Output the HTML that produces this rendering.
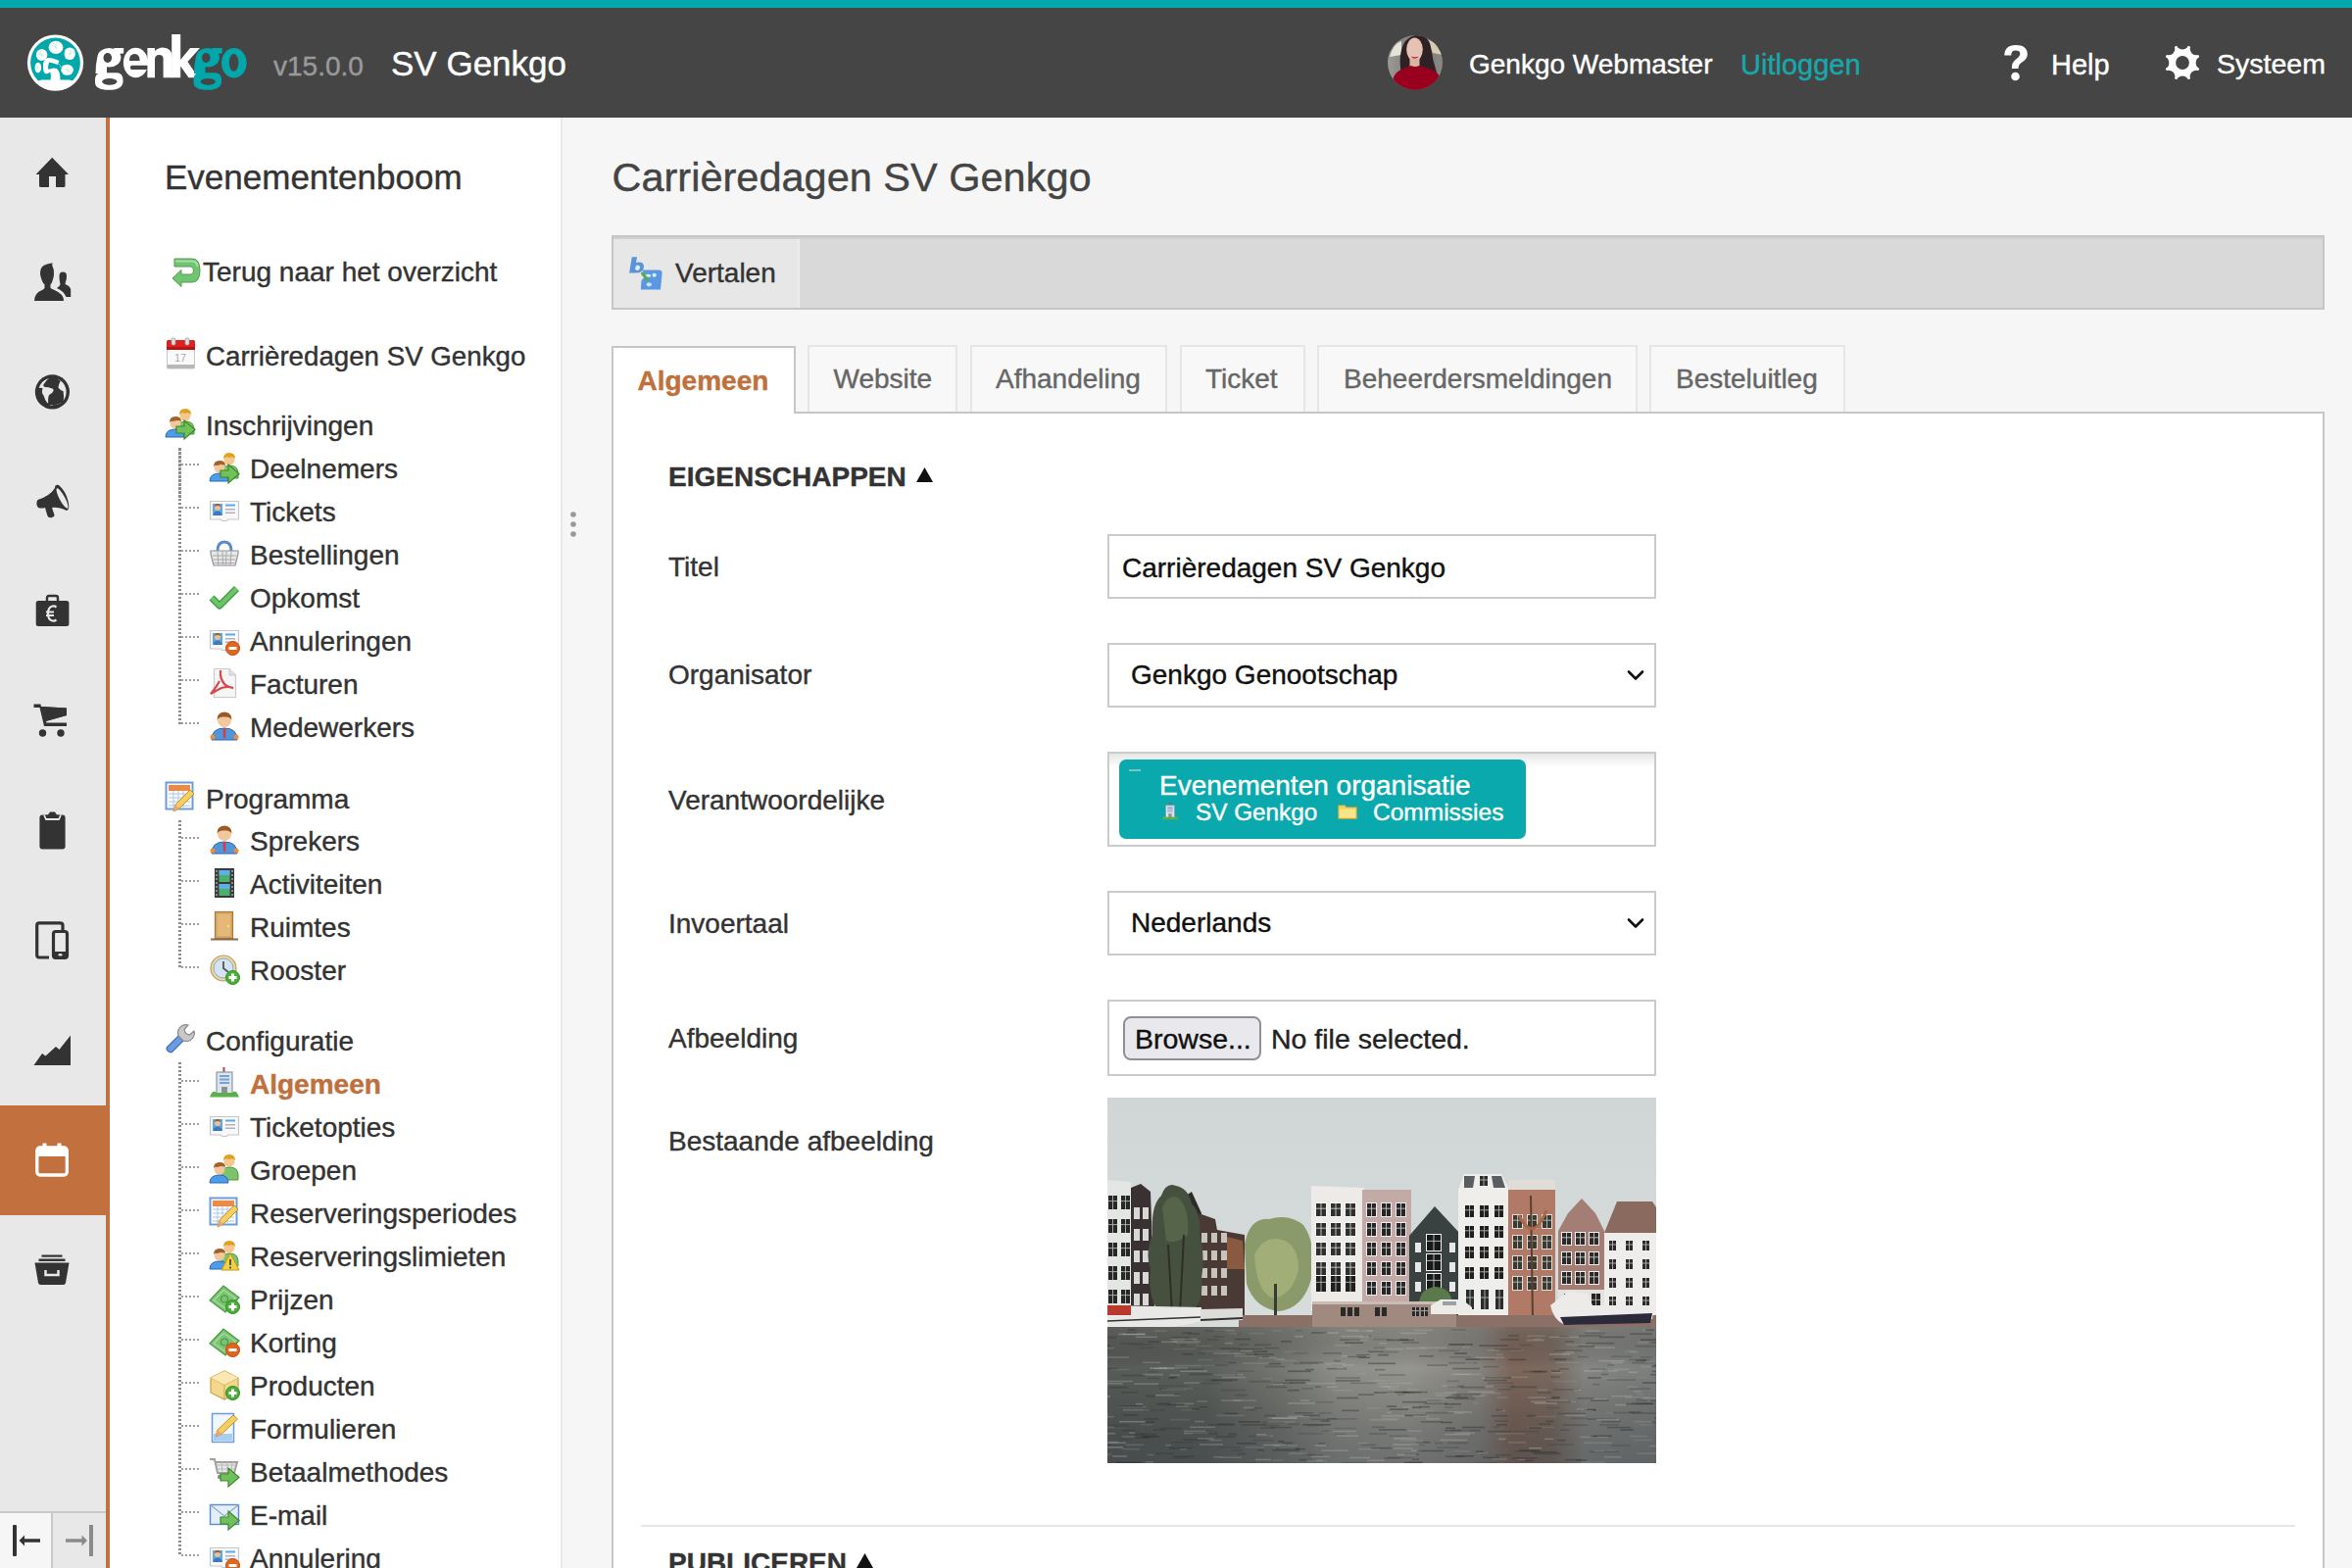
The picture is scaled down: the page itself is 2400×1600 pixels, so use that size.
<!DOCTYPE html>
<html><head><meta charset="utf-8"><title>Genkgo</title>
<style>
html,body{margin:0;padding:0;width:2400px;height:1600px;overflow:hidden;background:#f6f6f6;font-family:"Liberation Sans",sans-serif;}
.a{position:absolute;white-space:nowrap;line-height:1;margin:0;padding:0;box-sizing:border-box;-webkit-text-stroke:0.4px currentColor;}
svg.a{overflow:visible}
</style></head><body>
<div class="a" style="left:0px;top:0px;width:2400px;height:8px;background:#00a8ac"></div>
<div class="a" style="left:0px;top:8px;width:2400px;height:112px;background:#454545"></div>
<div class="a" style="left:0px;top:120px;width:108px;height:1480px;background:#e8e8e8"></div>
<div class="a" style="left:108px;top:120px;width:4px;height:1480px;background:#c2703d"></div>
<div class="a" style="left:0px;top:1128px;width:108px;height:112px;background:#c2703d"></div>
<div class="a" style="left:0px;top:1542px;width:108px;height:2px;background:#c9c9c9"></div>
<div class="a" style="left:0px;top:1544px;width:52px;height:56px;background:#f6f6f6"></div>
<div class="a" style="left:52px;top:1544px;width:2px;height:56px;background:#c9c9c9"></div>
<div class="a" style="left:112px;top:120px;width:460px;height:1480px;background:#fff"></div>
<div class="a" style="left:572px;top:120px;width:2px;height:1480px;background:#e8e8e8"></div>
<div class="a" style="left:574px;top:120px;width:1826px;height:1480px;background:#f6f6f6"></div>
<svg class="a" style="left:28px;top:35px;" width="57" height="58" viewBox="0 0 57 58">
<circle cx="28.5" cy="29" r="28.6" fill="#fff"/>
<circle cx="28.5" cy="29" r="25.4" fill="#00a8ac"/>
<path d="M32,19 L24.56,15.28 L31.22,17.26Z" fill="#fff"/><ellipse cx="29" cy="13.3" rx="7.4" ry="6.6" fill="#fff"/><path d="M30.59,14.14 L23.59,10.43 M29.86,14.76 L26.07,8.34 M28.88,14.95 L29.41,7.70 " stroke="#bfe9eb" stroke-width="0.7"/><path d="M19.5,25 L11.12,22.83 L16.34,24.66Z" fill="#fff"/><ellipse cx="14.6" cy="21" rx="5.8" ry="6.1" fill="#fff"/><path d="M16.04,21.20 L9.71,20.30 M15.72,21.96 L10.78,17.72 M15.08,22.44 L12.97,16.11 " stroke="#bfe9eb" stroke-width="0.7"/><path d="M38.5,25 L39.78,21.69 L44.91,23.58Z" fill="#fff"/><ellipse cx="43.2" cy="19.8" rx="5.7" ry="6.3" fill="#fff"/><path d="M42.94,21.35 L44.09,14.54 M42.24,20.97 L46.45,15.83 M41.83,20.24 L47.85,18.29 " stroke="#bfe9eb" stroke-width="0.7"/><path d="M13.5,34 L8.82,35.56 L11.79,37.12Z" fill="#fff"/><ellipse cx="10.8" cy="34" rx="3.3" ry="5.2" fill="#fff"/><path d="M11.50,33.32 L8.41,36.31 M11.62,34.00 L8.00,34.00 M11.50,34.68 L8.41,31.69 " stroke="#bfe9eb" stroke-width="0.7"/><path d="M35,32 L36.82,37.95 L42.49,39.60Z" fill="#fff"/><ellipse cx="40.6" cy="36.3" rx="6.3" ry="5.5" fill="#fff"/><path d="M39.03,36.16 L45.93,36.79 M39.35,35.46 L44.85,39.15 M40.04,35.02 L42.52,40.67 " stroke="#bfe9eb" stroke-width="0.7"/>
<path d="M5.9,46.5 Q10,48.5 14,46.5 L43,46.5 Q47,48.5 51.1,46.5 A28.6,28.6 0 0 1 5.9,46.5Z" fill="#fff"/>
<path d="M23.5,47 Q24.5,41 23,38.5 Q21,41 18,40 Q15.5,38 16,31 Q16.5,25.5 20.5,24 Q25,23.5 32.5,27 L31,31 Q26,29 22,28.5 Q20.5,33 21.5,36 Q26,33.5 30,35 Q33.5,38 33.5,47Z" fill="#fff"/>
<path d="M31,28.5 L34.5,34 L37,31" stroke="#5fe0e8" stroke-width="0.9" fill="none"/>
</svg>
<svg class="a" style="left:0px;top:0px;" width="400" height="120" viewBox="0 0 400 120"><ellipse cx="111.4" cy="58.7" rx="12" ry="9.8" fill="#fff"/><path d="M116,49 L126.2,49 L126.2,54.5 L119,55Z" fill="#fff"/><path d="M99.4,58 L106,62 L109,67 L109,75 L97.5,75 L98,66Z" fill="#fff"/><path d="M97,81 Q97,74.2 104,74.2 L119,74.2 Q125.6,74.2 125.6,82.5 Q125.6,91.8 111.3,91.8 Q97,91.8 97,84Z" fill="#fff"/><ellipse cx="109.8" cy="59" rx="4.3" ry="5" fill="#454545"/><ellipse cx="111.8" cy="83.3" rx="7.6" ry="3.4" fill="#454545"/><ellipse cx="138.5" cy="64" rx="12.6" ry="15.3" fill="#fff"/><path d="M132,62 Q132,55 137.3,55 Q142.6,55 142.6,62Z" fill="#454545"/><path d="M134,66.8 L152,66.8 L152,71 L134,71 Q131.8,69 134,66.8Z" fill="#454545"/><path d="M150.4,79.2 L150.4,49 L158,49 L158,52 Q161.5,48.5 166,48.5 Q175.8,48.5 175.8,59 L175.8,79.2 L166.6,79.2 L166.6,60 Q166.6,56 162.5,56 Q158,56 158,61 L158,79.2Z" fill="#fff"/><path d="M175.2,79.2 L175.2,34.9 L184.2,34.9 L184.2,61 L194,49 L204,49 L191.5,63 L202.5,79.2 L192.5,79.2 L184.2,67.5 L184.2,79.2Z" fill="#fff"/><ellipse cx="211.9" cy="58.7" rx="12" ry="9.8" fill="#00a8ac"/><path d="M216.5,49 L226.7,49 L226.7,54.5 L219.5,55Z" fill="#00a8ac"/><path d="M199.9,58 L206.5,62 L209.5,67 L209.5,75 L198.0,75 L198.5,66Z" fill="#00a8ac"/><path d="M197.5,81 Q197.5,74.2 204.5,74.2 L219.5,74.2 Q226.1,74.2 226.1,82.5 Q226.1,91.8 211.8,91.8 Q197.5,91.8 197.5,84Z" fill="#00a8ac"/><ellipse cx="210.3" cy="59" rx="4.3" ry="5" fill="#454545"/><ellipse cx="212.3" cy="83.3" rx="7.6" ry="3.4" fill="#454545"/><ellipse cx="238.8" cy="64.2" rx="12.8" ry="15.2" fill="#00a8ac"/><ellipse cx="238.6" cy="63.8" rx="4.8" ry="9" fill="#454545"/></svg>
<div class="a" style="left:279px;top:54.3px;font-size:28px;color:#9a9a9a;font-weight:400;">v15.0.0</div>
<div class="a" style="left:399px;top:47.4px;font-size:35px;color:#fff;font-weight:400;">SV Genkgo</div>
<svg class="a" style="left:1416px;top:36px;" width="56" height="56" viewBox="0 0 56 56">
<defs><clipPath id="avc"><circle cx="28" cy="28" r="28"/></clipPath>
<linearGradient id="avbg" x1="0" y1="0" x2="1" y2="0"><stop offset="0" stop-color="#9a9a96"/><stop offset=".5" stop-color="#7a7876"/><stop offset="1" stop-color="#8a8884"/></linearGradient></defs>
<g clip-path="url(#avc)">
<rect x="0" y="0" width="56" height="56" fill="url(#avbg)"/>
<path d="M2,22 Q6,8 14,6 L14,20Z" fill="#e4e4d8"/>
<path d="M40,4 Q52,8 56,20 L46,18Z" fill="#d8ccb0"/>
<path d="M14,40 Q10,18 18,6 Q24,0 30,0 Q42,0 44,12 Q46,26 50,38 Q52,44 48,46 L30,44Z" fill="#2e2224"/>
<ellipse cx="27.5" cy="14.5" rx="8.3" ry="12" fill="#e6c2b4"/>
<path d="M23.5,21.5 Q27.5,26 32,21.5 Q28,23 23.5,21.5Z" fill="#b8283a"/>
<rect x="22.5" y="24" width="10" height="8" fill="#dcb4a4"/>
<path d="M4,56 Q4,40 12,36 Q20,32 24,31 Q28,33 32,31 Q46,34 52,40 Q54,48 52,56Z" fill="#98001e"/>
</g></svg>
<div class="a" style="left:1499px;top:52.1px;font-size:28px;color:#fff;font-weight:400;">Genkgo Webmaster</div>
<div class="a" style="left:1776px;top:51.7px;font-size:29px;color:#17a8ac;font-weight:400;">Uitloggen</div>
<svg class="a" style="left:2035px;top:40px;" width="45" height="50" viewBox="0 0 45 50"><path d="M10.2,16.6 Q10.5,5.9 21.8,5.9 Q33.8,5.9 33.8,15.5 Q33.8,20.5 27.5,24 Q24.5,26 24.5,30 L17.8,30 Q17.6,24 21.5,21 Q26.3,17.5 26.3,15 Q26.3,11.6 21.8,11.6 Q17.2,11.6 17.2,16.6Z" fill="#fff"/><circle cx="21.5" cy="38" r="4.3" fill="#fff"/></svg>
<div class="a" style="left:2093px;top:51.7px;font-size:29px;color:#fff;font-weight:400;">Help</div>
<svg class="a" style="left:2200px;top:40px;" width="60" height="50" viewBox="0 0 60 50"><defs><mask id="gm"><rect width="60" height="50" fill="#000"/><circle cx="27" cy="24" r="18.2" fill="#fff"/><circle cx="47.20" cy="24.00" r="6.6" fill="#000"/><circle cx="41.28" cy="38.28" r="6.6" fill="#000"/><circle cx="27.00" cy="44.20" r="6.6" fill="#000"/><circle cx="12.72" cy="38.28" r="6.6" fill="#000"/><circle cx="6.80" cy="24.00" r="6.6" fill="#000"/><circle cx="12.72" cy="9.72" r="6.6" fill="#000"/><circle cx="27.00" cy="3.80" r="6.6" fill="#000"/><circle cx="41.28" cy="9.72" r="6.6" fill="#000"/><circle cx="27" cy="24" r="6.9" fill="#000"/></mask></defs><rect width="60" height="50" fill="#fff" mask="url(#gm)"/></svg>
<div class="a" style="left:2262px;top:50.9px;font-size:28.5px;color:#fff;font-weight:400;">Systeem</div>
<svg class="a" style="left:36px;top:160px;" width="36" height="32" viewBox="0 0 36 32"><path d="M0.6,18 L17.2,0.7 L34,18Z" fill="#333"/><path d="M4,17 L30.5,17 L30.5,29.5 Q30.5,31 29,31 L21,31 L21,20 L14,20 L14,31 L5.5,31 Q4,31 4,29.5Z" fill="#333"/></svg>
<svg class="a" style="left:35px;top:268px;" width="38" height="40" viewBox="0 0 38 40"><path d="M25.5,13.5 Q25.5,9.5 29.3,9.5 Q33,9.5 33,13.5 Q33,17 32,19.5 L31.5,22 Q36,23.5 37.2,27 L37.2,35 L32.5,35 Q30,29 23,26 Q26,24.5 26.5,22 L26,19.5 Q25.5,17 25.5,13.5Z" fill="#333"/>
<path d="M6,10.5 Q6,3 13,1.5 Q16,0.5 19,0.5 Q17.5,2 18.5,3.5 Q20,6 20,11 Q20,14 19.3,16 Q18.5,20 16.5,22.5 L16.5,26 Q18,27 21,28.3 Q30,32 30,39 L0,39 Q0,31 8,28 Q10,27 10.5,26 L10.5,22.5 Q8,20 7,16 Q6,13.5 6,10.5Z" fill="none" stroke="#e8e8e8" stroke-width="3.2"/>
<path d="M6,10.5 Q6,3 13,1.5 Q16,0.5 19,0.5 Q17.5,2 18.5,3.5 Q20,6 20,11 Q20,14 19.3,16 Q18.5,20 16.5,22.5 L16.5,26 Q18,27 21,28.3 Q30,32 30,39 L0,39 Q0,31 8,28 Q10,27 10.5,26 L10.5,22.5 Q8,20 7,16 Q6,13.5 6,10.5Z" fill="#333"/></svg>
<svg class="a" style="left:35px;top:381px;" width="37" height="38" viewBox="0 0 37 38"><circle cx="18.4" cy="18.9" r="17.6" fill="#333"/>
<circle cx="18.4" cy="18.9" r="14.2" fill="#e8e8e8"/>
<path d="M16.8,3.6 L22.8,3.6 Q23.5,6.5 26.8,7.8 Q25,10.5 24.4,14.6 Q26,17 29.6,18.3 Q30.5,24 29.6,28.8 Q26,31.5 19.5,32.3 Q14,33 13,33.6 L12,31 Q13.6,30.6 14.2,29.8 Q13.8,24 15.4,21.8 Q20,19 19.6,16.4 Q18,14.6 11.5,14 Q9,13.8 9.3,11.6 Q12,7 16.8,3.6Z" fill="#333"/>
<path d="M3.8,15 Q7.5,14.2 8.6,15.3 Q6.8,19.5 9.5,22.5 Q10.6,27 13.8,31 L12,33.5 Q5,31 3.8,22Z" fill="#333"/>
<path d="M14,34 Q20,31.5 27,31 Q25,34 18,35Z" fill="#333"/></svg>
<svg class="a" style="left:37px;top:494px;" width="34" height="37" viewBox="0 0 34 37"><path d="M1.5,16 Q-1,20 2,24 Q5,25 9,24 L11,31 Q12,35 16,34 L18,33 Q19,32 18,30 L16,24 Q22,23 31,27 Q34,26 33,20 Q31,8 23,1 Q19,0 19,4 Q14,12 1.5,16Z" fill="#333"/>
<ellipse cx="26.5" cy="14.5" rx="2.8" ry="11.5" transform="rotate(-28 26.5 14.5)" fill="#e8e8e8"/></svg>
<svg class="a" style="left:36px;top:607px;" width="36" height="34" viewBox="0 0 36 34"><path d="M12,6 L12,3 Q12,1 14,1 L21,1 Q23,1 23,3 L23,6" stroke="#333" stroke-width="2.4" fill="none"/>
<rect x="0.7" y="6" width="33.7" height="26" rx="2.5" fill="#333"/>
<path d="M21.5,12.5 Q19.5,11 17.5,11.5 Q13,12.5 13,19 Q13,25.5 17.5,26.5 Q19.5,27 21.5,25.5" stroke="#e8e8e8" stroke-width="2.2" fill="none"/>
<path d="M11,17.5 L19,17.5 M11,21 L19,21" stroke="#e8e8e8" stroke-width="1.8"/></svg>
<svg class="a" style="left:34px;top:718px;" width="36" height="36" viewBox="0 0 36 36"><path d="M0.5,0.5 L7.5,0.5 L8,3 L34,4.5 L34,12 L13,18 L13.5,19.5 L34,19.5 L34,23 L11,23 L6.5,4 L0.5,4Z" fill="#333"/>
<path d="M7.5,3 L34,4.5 L34,12 L12,18Z" fill="#333"/>
<circle cx="9.5" cy="30" r="3.7" fill="#333"/><circle cx="28" cy="30" r="3.7" fill="#333"/></svg>
<svg class="a" style="left:40px;top:828px;" width="28" height="40" viewBox="0 0 28 40"><rect x="0.4" y="3.5" width="26.2" height="35" rx="3" fill="#333"/>
<path d="M5,3.5 L7,8 L20,8 L22,3.5" stroke="#e8e8e8" stroke-width="1.8" fill="none"/>
<path d="M9,3.5 L11,0.5 L16,0.5 L18,3.5 L21,4 L19.5,6.5 L7.5,6.5 L6,4Z" fill="#333"/></svg>
<svg class="a" style="left:36px;top:940px;" width="35" height="40" viewBox="0 0 35 40"><path d="M14,37 L4,37 Q1.7,37 1.7,34.5 L1.7,4 Q1.7,1.8 4,1.8 L25.5,1.8 Q28,1.8 28,4 L28,9" stroke="#333" stroke-width="3.2" fill="none"/>
<rect x="18.5" y="10.5" width="14" height="27" rx="2.5" stroke="#333" stroke-width="3.2" fill="none"/>
<rect x="18.5" y="31" width="14" height="6.5" fill="#333"/>
<ellipse cx="25.5" cy="34.3" rx="2" ry="1.3" fill="#e8e8e8"/></svg>
<svg class="a" style="left:34px;top:1056px;" width="39" height="32" viewBox="0 0 39 32"><path d="M0.5,31 L9,19 L12.5,21.5 L23,12 L26.5,15 L38,0.5 L38,31Z" fill="#333"/></svg>
<svg class="a" style="left:36px;top:1166px;" width="35" height="36" viewBox="0 0 35 36"><rect x="1.8" y="5" width="30.5" height="28" rx="3" stroke="#fff" stroke-width="3.3" fill="none"/>
<rect x="1.8" y="5" width="30.5" height="9" fill="#fff"/>
<rect x="7.5" y="0.5" width="4" height="8" fill="#fff"/><rect x="22.5" y="0.5" width="4" height="8" fill="#fff"/>
<rect x="6.5" y="7.5" width="6" height="3" fill="#fff"/></svg>
<svg class="a" style="left:35px;top:1280px;" width="37" height="32" viewBox="0 0 37 32"><rect x="7.5" y="0.5" width="21" height="2.2" fill="#333"/>
<rect x="4.5" y="4.5" width="27" height="2.5" fill="#333"/>
<path d="M0.5,8.5 L35.5,8.5 L32,29 Q31.5,31 29.5,31 L6.5,31 Q4.5,31 4,29Z" fill="#333"/>
<path d="M11.5,16 L11.5,21 L24.5,21 L24.5,16" stroke="#e8e8e8" stroke-width="2.5" fill="none"/></svg>
<svg class="a" style="left:0px;top:1550px;" width="108" height="50" viewBox="0 0 108 50"><rect x="13" y="6" width="4" height="32" rx="1" fill="#333"/>
<path d="M19.5,22 L25,16.5 L25,20.3 L41,20.3 L41,23.7 L25,23.7 L25,27.5Z" fill="#333"/>
<rect x="91" y="6" width="4" height="32" fill="#8a8a8a"/>
<path d="M89,22 L83.5,16.5 L83.5,20.3 L67,20.3 L67,23.7 L83.5,23.7 L83.5,27.5Z" fill="#8a8a8a"/></svg>
<div class="a" style="left:168px;top:162.8px;font-size:35px;color:#333;font-weight:400;">Evenementenboom</div>
<div class="a" style="left:207px;top:263.6px;font-size:28px;color:#333;font-weight:400;">Terug naar het overzicht</div>
<div class="a" style="left:210px;top:349.5px;font-size:27.7px;color:#333;font-weight:400;">Carrièredagen SV Genkgo</div>
<div class="a" style="left:210px;top:421.1px;font-size:28px;color:#333;font-weight:400;">Inschrijvingen</div>
<div class="a" style="left:255px;top:464.7px;font-size:28px;color:#333;font-weight:400;">Deelnemers</div>
<div class="a" style="left:255px;top:508.6px;font-size:28px;color:#333;font-weight:400;">Tickets</div>
<div class="a" style="left:255px;top:552.6px;font-size:28px;color:#333;font-weight:400;">Bestellingen</div>
<div class="a" style="left:255px;top:596.6px;font-size:28px;color:#333;font-weight:400;">Opkomst</div>
<div class="a" style="left:255px;top:640.6px;font-size:28px;color:#333;font-weight:400;">Annuleringen</div>
<div class="a" style="left:255px;top:684.6px;font-size:28px;color:#333;font-weight:400;">Facturen</div>
<div class="a" style="left:255px;top:728.6px;font-size:28px;color:#333;font-weight:400;">Medewerkers</div>
<div class="a" style="left:210px;top:801.5px;font-size:28px;color:#333;font-weight:400;">Programma</div>
<div class="a" style="left:255px;top:845.3px;font-size:28px;color:#333;font-weight:400;">Sprekers</div>
<div class="a" style="left:255px;top:889.3px;font-size:28px;color:#333;font-weight:400;">Activiteiten</div>
<div class="a" style="left:255px;top:933.3px;font-size:28px;color:#333;font-weight:400;">Ruimtes</div>
<div class="a" style="left:255px;top:977.3px;font-size:28px;color:#333;font-weight:400;">Rooster</div>
<div class="a" style="left:210px;top:1048.7px;font-size:28px;color:#333;font-weight:400;">Configuratie</div>
<div class="a" style="left:255px;top:1093.3px;font-size:28px;color:#c0703d;font-weight:700;">Algemeen</div>
<div class="a" style="left:255px;top:1137.3px;font-size:28px;color:#333;font-weight:400;">Ticketopties</div>
<div class="a" style="left:255px;top:1181.3px;font-size:28px;color:#333;font-weight:400;">Groepen</div>
<div class="a" style="left:255px;top:1225.3px;font-size:28px;color:#333;font-weight:400;">Reserveringsperiodes</div>
<div class="a" style="left:255px;top:1269.3px;font-size:28px;color:#333;font-weight:400;">Reserveringslimieten</div>
<div class="a" style="left:255px;top:1313.3px;font-size:28px;color:#333;font-weight:400;">Prijzen</div>
<div class="a" style="left:255px;top:1357.3px;font-size:28px;color:#333;font-weight:400;">Korting</div>
<div class="a" style="left:255px;top:1401.3px;font-size:28px;color:#333;font-weight:400;">Producten</div>
<div class="a" style="left:255px;top:1445.3px;font-size:28px;color:#333;font-weight:400;">Formulieren</div>
<div class="a" style="left:255px;top:1489.3px;font-size:28px;color:#333;font-weight:400;">Betaalmethodes</div>
<div class="a" style="left:255px;top:1533.3px;font-size:28px;color:#333;font-weight:400;">E-mail</div>
<div class="a" style="left:255px;top:1577.3px;font-size:28px;color:#333;font-weight:400;">Annulering</div>
<div class="a" style="left:182px;top:457px;width:2.5px;height:282px;background:repeating-linear-gradient(to bottom,#8c8c8c 0,#8c8c8c 2.5px,transparent 2.5px,transparent 4px)"></div>
<div class="a" style="left:185px;top:473px;width:20px;height:2px;background:repeating-linear-gradient(to right,#a0a0a0 0,#a0a0a0 2px,transparent 2px,transparent 4px)"></div>
<div class="a" style="left:185px;top:517px;width:20px;height:2px;background:repeating-linear-gradient(to right,#a0a0a0 0,#a0a0a0 2px,transparent 2px,transparent 4px)"></div>
<div class="a" style="left:185px;top:561px;width:20px;height:2px;background:repeating-linear-gradient(to right,#a0a0a0 0,#a0a0a0 2px,transparent 2px,transparent 4px)"></div>
<div class="a" style="left:185px;top:605px;width:20px;height:2px;background:repeating-linear-gradient(to right,#a0a0a0 0,#a0a0a0 2px,transparent 2px,transparent 4px)"></div>
<div class="a" style="left:185px;top:649px;width:20px;height:2px;background:repeating-linear-gradient(to right,#a0a0a0 0,#a0a0a0 2px,transparent 2px,transparent 4px)"></div>
<div class="a" style="left:185px;top:693px;width:20px;height:2px;background:repeating-linear-gradient(to right,#a0a0a0 0,#a0a0a0 2px,transparent 2px,transparent 4px)"></div>
<div class="a" style="left:185px;top:737px;width:20px;height:2px;background:repeating-linear-gradient(to right,#a0a0a0 0,#a0a0a0 2px,transparent 2px,transparent 4px)"></div>
<div class="a" style="left:182px;top:837px;width:2.5px;height:151px;background:repeating-linear-gradient(to bottom,#8c8c8c 0,#8c8c8c 2.5px,transparent 2.5px,transparent 4px)"></div>
<div class="a" style="left:185px;top:854px;width:20px;height:2px;background:repeating-linear-gradient(to right,#a0a0a0 0,#a0a0a0 2px,transparent 2px,transparent 4px)"></div>
<div class="a" style="left:185px;top:898px;width:20px;height:2px;background:repeating-linear-gradient(to right,#a0a0a0 0,#a0a0a0 2px,transparent 2px,transparent 4px)"></div>
<div class="a" style="left:185px;top:942px;width:20px;height:2px;background:repeating-linear-gradient(to right,#a0a0a0 0,#a0a0a0 2px,transparent 2px,transparent 4px)"></div>
<div class="a" style="left:185px;top:986px;width:20px;height:2px;background:repeating-linear-gradient(to right,#a0a0a0 0,#a0a0a0 2px,transparent 2px,transparent 4px)"></div>
<div class="a" style="left:182px;top:1084px;width:2.5px;height:504px;background:repeating-linear-gradient(to bottom,#8c8c8c 0,#8c8c8c 2.5px,transparent 2.5px,transparent 4px)"></div>
<div class="a" style="left:185px;top:1102px;width:20px;height:2px;background:repeating-linear-gradient(to right,#a0a0a0 0,#a0a0a0 2px,transparent 2px,transparent 4px)"></div>
<div class="a" style="left:185px;top:1146px;width:20px;height:2px;background:repeating-linear-gradient(to right,#a0a0a0 0,#a0a0a0 2px,transparent 2px,transparent 4px)"></div>
<div class="a" style="left:185px;top:1190px;width:20px;height:2px;background:repeating-linear-gradient(to right,#a0a0a0 0,#a0a0a0 2px,transparent 2px,transparent 4px)"></div>
<div class="a" style="left:185px;top:1234px;width:20px;height:2px;background:repeating-linear-gradient(to right,#a0a0a0 0,#a0a0a0 2px,transparent 2px,transparent 4px)"></div>
<div class="a" style="left:185px;top:1278px;width:20px;height:2px;background:repeating-linear-gradient(to right,#a0a0a0 0,#a0a0a0 2px,transparent 2px,transparent 4px)"></div>
<div class="a" style="left:185px;top:1322px;width:20px;height:2px;background:repeating-linear-gradient(to right,#a0a0a0 0,#a0a0a0 2px,transparent 2px,transparent 4px)"></div>
<div class="a" style="left:185px;top:1366px;width:20px;height:2px;background:repeating-linear-gradient(to right,#a0a0a0 0,#a0a0a0 2px,transparent 2px,transparent 4px)"></div>
<div class="a" style="left:185px;top:1410px;width:20px;height:2px;background:repeating-linear-gradient(to right,#a0a0a0 0,#a0a0a0 2px,transparent 2px,transparent 4px)"></div>
<div class="a" style="left:185px;top:1454px;width:20px;height:2px;background:repeating-linear-gradient(to right,#a0a0a0 0,#a0a0a0 2px,transparent 2px,transparent 4px)"></div>
<div class="a" style="left:185px;top:1498px;width:20px;height:2px;background:repeating-linear-gradient(to right,#a0a0a0 0,#a0a0a0 2px,transparent 2px,transparent 4px)"></div>
<div class="a" style="left:185px;top:1542px;width:20px;height:2px;background:repeating-linear-gradient(to right,#a0a0a0 0,#a0a0a0 2px,transparent 2px,transparent 4px)"></div>
<div class="a" style="left:185px;top:1586px;width:20px;height:2px;background:repeating-linear-gradient(to right,#a0a0a0 0,#a0a0a0 2px,transparent 2px,transparent 4px)"></div>
<svg class="a" style="left:0;top:0" width="574" height="1600"><defs><symbol id="i-back" viewBox="0 0 32 32" overflow="visible"><path d="M4,2 L22,2 Q30,2 30,14 Q30,26 22,26 L11,26 L11,30.5 L2,22 L11,13.5 L11,18 L21,18 Q23.5,18 23.5,14 Q23.5,10 21,10 L4,10Z" fill="#72c472" stroke="#48a048" stroke-width="1"/>
<path d="M5,4.5 L22,4.5 Q27,4.5 27.5,10" stroke="#a8dca8" stroke-width="2" fill="none"/></symbol><symbol id="i-cal" viewBox="0 0 32 32" overflow="visible"><rect x="1.5" y="3" width="28" height="28" rx="1.5" fill="#fafafa" stroke="#c8c8c8" stroke-width="1"/>
<rect x="1" y="2" width="29" height="10" rx="1.5" fill="#dd2020"/>
<rect x="1" y="9" width="29" height="3" fill="#b81414"/>
<rect x="6" y="0" width="4" height="7" rx="1.5" fill="#ddd" stroke="#999" stroke-width=".8"/>
<rect x="20" y="0" width="4" height="7" rx="1.5" fill="#ddd" stroke="#999" stroke-width=".8"/>
<text x="9" y="24" font-family="Liberation Sans" font-size="11" fill="#aaa">17</text>
<rect x="1.5" y="27" width="28" height="4" fill="#b8b8b8"/></symbol><symbol id="i-users" viewBox="0 0 32 32" overflow="visible"><circle cx="21" cy="8" r="5.5" fill="#f5c890"/>
<path d="M15,7 Q15,1 21,1 Q27,1 27,7 Q24,4 21,6 Q18,4 15,7Z" fill="#e0a020"/>
<path d="M13,22 Q13,14 21,14 Q30,14 30,22 L30,27 L13,27Z" fill="#7cc36a" stroke="#4a9a3a" stroke-width="1"/>
<circle cx="11" cy="16" r="5.5" fill="#f3c79d"/>
<path d="M5,15 Q5,9 11,9 Q17,9 17,14 Q13,12 9,14 Q7,13 5,15Z" fill="#a0622c"/>
<path d="M1,30 Q1,22 11,22 Q20,22 20,30Z" fill="#4c9ce8" stroke="#2a6cb8" stroke-width="1"/></symbol><symbol id="i-arrow" viewBox="0 0 32 32" overflow="visible"><path d="M12,19 L20,19 L20,13 L31,22.5 L20,32 L20,26 L12,26Z" fill="#72c05c" stroke="#3a8a2a" stroke-width="1.2"/></symbol><symbol id="i-card" viewBox="0 0 32 32" overflow="visible"><path d="M1.5,6.5 L30.5,6.5 L30.5,25 L20,25 L18,26.5 L14,26.5 L12,25 L1.5,25Z" fill="#f8f8fa" stroke="#c4c8cc" stroke-width="1.2"/>
<rect x="4" y="9" width="10" height="12" fill="#5ea8e8"/>
<circle cx="9" cy="13" r="3" fill="#f0c090"/><path d="M6,12 Q6,9 9,9 Q12,9 12,12 Q9,10 6,12Z" fill="#a05a28"/>
<path d="M4.5,21 Q5,16.5 9,16.5 Q13,16.5 13.5,21Z" fill="#3a78c0"/>
<rect x="17" y="9.5" width="10" height="2" fill="#5ea8e8"/>
<rect x="17" y="14" width="10" height="1.5" fill="#b0b4b8"/><rect x="17" y="17.5" width="10" height="1.5" fill="#b0b4b8"/></symbol><symbol id="i-basket" viewBox="0 0 32 32" overflow="visible"><path d="M9,13 Q9,4 16,4 Q23,4 23,13" stroke="#5a8ac8" stroke-width="3" fill="none"/>
<path d="M2,13 L30,13 L30,16 L27,28 L5,28 L2,16Z" fill="#e8e8e8" stroke="#909090" stroke-width="1.2"/>
<path d="M4,18 L28,18 M4.8,22 L27.2,22 M5.5,25.5 L26.5,25.5 M9,14 L10,28 M14,14 L14.5,28 M18,14 L17.5,28 M23,14 L22,28" stroke="#a8a8a8" stroke-width="1"/></symbol><symbol id="i-check" viewBox="0 0 32 32" overflow="visible"><path d="M3,17 L11,25 L28.5,7.5" stroke="#3d9a3d" stroke-width="7" fill="none" stroke-linejoin="round"/>
<path d="M3,17 L11,25 L28.5,7.5" stroke="#6cc46c" stroke-width="4.5" fill="none" stroke-linejoin="round"/></symbol><symbol id="i-minus" viewBox="0 0 32 32" overflow="visible"><circle cx="24.5" cy="24.5" r="7" fill="#e2661e" stroke="#c04a10" stroke-width="1"/><rect x="20.5" y="23" width="8" height="3" fill="#fff"/></symbol><symbol id="i-plus" viewBox="0 0 32 32" overflow="visible"><circle cx="24.5" cy="24.5" r="7" fill="#4caf3a" stroke="#2e8a22" stroke-width="1"/><path d="M20.5,24.5 L28.5,24.5 M24.5,20.5 L24.5,28.5" stroke="#fff" stroke-width="3"/></symbol><symbol id="i-pdf" viewBox="0 0 32 32" overflow="visible"><path d="M5.5,1.5 L21,1.5 L27.5,8 L27.5,30.5 L5.5,30.5Z" fill="#f6f6f6" stroke="#cacaca" stroke-width="1.2"/>
<path d="M21,1.5 L21,8 L27.5,8" fill="#e0e0e0" stroke="#cacaca" stroke-width="1"/>
<path d="M12,3 Q11,12 17,18 Q21,21 25,21 Q20,19 13,21 Q7,24 2,27 Q8,20 11,14" stroke="#d84848" stroke-width="2.2" fill="none"/></symbol><symbol id="i-user" viewBox="0 0 32 32" overflow="visible"><circle cx="16" cy="10" r="7" fill="#f3c79d"/>
<path d="M8.5,10 Q8,2 16,1.5 Q24,2 23.5,10 Q22,6 16,6.5 Q10,6 8.5,10Z" fill="#9a5a26"/>
<path d="M3,30 Q3,18 16,18 Q29,18 29,30Z" fill="#5494d8" stroke="#2e64a8" stroke-width="1"/>
<path d="M14.5,18.5 L17.5,18.5 L17,28 L15,28Z" fill="#d04040"/>
<circle cx="4" cy="27" r="2.5" fill="#e89040"/><circle cx="28" cy="27" r="2.5" fill="#e89040"/></symbol><symbol id="i-calpen" viewBox="0 0 32 32" overflow="visible"><rect x="1.5" y="1.5" width="27" height="27" fill="#fff" stroke="#6c9ce0" stroke-width="2"/>
<rect x="4" y="4" width="22" height="6" fill="#f08a40"/>
<path d="M4,13 L26,13 M4,17 L26,17 M4,21 L26,21 M4,25 L26,25 M9,10 L9,27 M14,10 L14,27 M19,10 L19,27" stroke="#a8c4e8" stroke-width="1"/>
<path d="M9,31 L11,24 L26,9 L30,13 L15,28Z" fill="#f4d060" stroke="#c89020" stroke-width="1"/>
<path d="M9,31 L11,24 L15,28Z" fill="#e8a878"/></symbol><symbol id="i-film" viewBox="0 0 32 32" overflow="visible"><rect x="6" y="1" width="20" height="30" fill="#3a3a3a"/>
<rect x="10.5" y="3" width="11" height="12" fill="#4caf6a"/><rect x="10.5" y="3" width="11" height="5" fill="#5ab0e8"/>
<rect x="10.5" y="17" width="11" height="12" fill="#4caf6a"/><rect x="10.5" y="17" width="11" height="5" fill="#5ab0e8"/>
<path d="M8,3 L8,30 M24,3 L24,30" stroke="#8a8a8a" stroke-width="2" stroke-dasharray="2 2"/></symbol><symbol id="i-door" viewBox="0 0 32 32" overflow="visible"><rect x="6.5" y="1.5" width="18" height="27" fill="#d8a868" stroke="#a87838" stroke-width="1.2"/>
<rect x="9" y="4" width="13" height="22" fill="#e4b878"/>
<circle cx="20" cy="16" r="1.2" fill="#f8e080"/>
<rect x="2" y="28.5" width="28" height="2" fill="#8a6a4a"/></symbol><symbol id="i-clock" viewBox="0 0 32 32" overflow="visible"><circle cx="15" cy="15" r="13" fill="#e8d8a8" stroke="#b8a068" stroke-width="1.2"/>
<circle cx="15" cy="15" r="10" fill="#d4e4f4" stroke="#98a8b8" stroke-width="1"/>
<path d="M15,8 L15,15 L20,19" stroke="#555" stroke-width="1.8" fill="none"/></symbol><symbol id="i-wrench" viewBox="0 0 32 32" overflow="visible"><path d="M3,28 Q1,26 3,24 L15,12 L20,17 L8,29 Q6,31 3,28Z" fill="#6c9ce0" stroke="#4070b8" stroke-width="1.2"/>
<path d="M14,13 Q12,6 18,2.5 Q21,1 24,2 L20,6.5 L21.5,10.5 L25.5,12 L30,8 Q31,11 29.5,14 Q26,20 19,18Z" fill="#c8c8c8" stroke="#8a8a8a" stroke-width="1.2"/></symbol><symbol id="i-building" viewBox="0 0 32 32" overflow="visible"><rect x="14.5" y="0" width="2" height="5" fill="#c04040"/>
<rect x="8" y="5" width="16" height="22" fill="#dce4ec" stroke="#8a98a8" stroke-width="1.2"/>
<path d="M11,9 L21,9 M11,12.5 L21,12.5 M11,16 L21,16" stroke="#7aa0d8" stroke-width="2"/>
<rect x="13" y="20" width="6" height="7" fill="#909090"/>
<path d="M1,30.5 Q4,22 8,26 L24,26 Q28,22 31,30.5Z" fill="#5cb04c"/></symbol><symbol id="i-money" viewBox="0 0 32 32" overflow="visible"><path d="M1,18 L15,3 L31,15 L17,30Z" fill="#7cc474" stroke="#4a9a42" stroke-width="1.2"/>
<path d="M5,18 L15,7.5 L27,15.5 L17,26Z" fill="none" stroke="#a8dca0" stroke-width="1.2"/>
<circle cx="16" cy="16.5" r="3.5" fill="none" stroke="#4a9a42" stroke-width="1.2"/></symbol><symbol id="i-box" viewBox="0 0 32 32" overflow="visible"><path d="M2,9 L16,2 L30,9 L30,24 L16,31 L2,24Z" fill="#f4d88a" stroke="#c8a050" stroke-width="1.2"/>
<path d="M2,9 L16,16 L30,9 M16,16 L16,31" stroke="#c8a050" stroke-width="1" fill="none"/>
<path d="M2,9 L16,2 L30,9 L16,16Z" fill="#fbe8b0"/></symbol><symbol id="i-pagepen" viewBox="0 0 32 32" overflow="visible"><rect x="3.5" y="1.5" width="22" height="29" fill="#f0f6fc" stroke="#6c9ce0" stroke-width="1.5"/>
<rect x="5" y="22" width="19" height="7" fill="#a8cdf0"/>
<path d="M7,25 L9,18 L25,3 L29.5,7 L13.5,22Z" fill="#f4d060" stroke="#c89020" stroke-width="1"/>
<path d="M7,25 L9,18 L13.5,22Z" fill="#e8a878"/></symbol><symbol id="i-cart" viewBox="0 0 32 32" overflow="visible"><path d="M1,4 L6,4 L9,18 L26,18 L29,7 L7,7" stroke="#a0a0a0" stroke-width="2" fill="#e8e8e8"/>
<path d="M8,10 L28,10 M8.5,14 L27,14 M13,7 L14,18 M19,7 L19,18 M24,7 L23,18" stroke="#b8b8b8" stroke-width="1"/>
<circle cx="11" cy="22" r="2.2" fill="#909090"/></symbol><symbol id="i-mail" viewBox="0 0 32 32" overflow="visible"><rect x="1.5" y="6.5" width="29" height="20" fill="#e4eefa" stroke="#5a8cd0" stroke-width="1.4"/>
<path d="M1.5,6.5 L16,18 L30.5,6.5" stroke="#8aaad8" stroke-width="1.2" fill="none"/></symbol><symbol id="i-warn" viewBox="0 0 32 32" overflow="visible"><path d="M22,14 L31,31 L13,31Z" fill="#f4d040" stroke="#c89818" stroke-width="1"/><rect x="21" y="20" width="2" height="6" fill="#555"/><rect x="21" y="27.5" width="2" height="2" fill="#555"/></symbol><symbol id="i-translate" viewBox="0 0 32 32" overflow="visible"><path d="M4.5,2 L9.5,2 L8.5,7.5 Q15.5,6 16,11 Q16,17.5 8,17.5 L2,17.5Z" fill="#5a94d8"/>
<ellipse cx="10" cy="12.5" rx="2.2" ry="2.6" fill="#d8ecfa" transform="rotate(20 10 12.5)"/>
<path d="M15,14.5 L31,14.5 Q34,15 33.5,18 L32,33.5 L13,33.5 L13.5,26 Q14,22 19,21.5 L22,21.5 Q25,17.5 16,19Z" fill="#5a98e4"/>
<ellipse cx="26" cy="19.5" rx="2" ry="1.8" fill="#d8ecfa"/><ellipse cx="21" cy="28.5" rx="2.5" ry="2" fill="#c8e4fa"/>
<path d="M14,17 L20,25" stroke="#58a858" stroke-width="3"/></symbol><symbol id="i-folder" viewBox="0 0 32 32" overflow="visible"><path d="M1,6 L12,6 L14,9 L31,9 L31,28 L1,28Z" fill="#f0d060" stroke="#c8a030" stroke-width="1.2"/><rect x="3" y="12" width="26" height="14" fill="#f8e48a"/></symbol></defs><use href="#i-back" x="174" y="262" width="32" height="32"/><use href="#i-cal" x="169" y="345" width="32" height="32"/><use href="#i-users" x="168" y="416" width="32" height="32"/><use href="#i-arrow" x="168" y="416" width="32" height="32"/><use href="#i-users" x="213" y="461" width="32" height="32"/><use href="#i-arrow" x="213" y="461" width="32" height="32"/><use href="#i-card" x="213" y="505" width="32" height="32"/><use href="#i-basket" x="213" y="549" width="32" height="32"/><use href="#i-check" x="213" y="593" width="32" height="32"/><use href="#i-card" x="213" y="637" width="32" height="32"/><use href="#i-minus" x="213" y="637" width="32" height="32"/><use href="#i-pdf" x="213" y="681" width="32" height="32"/><use href="#i-user" x="213" y="725" width="32" height="32"/><use href="#i-calpen" x="168" y="797" width="32" height="32"/><use href="#i-user" x="213" y="841" width="32" height="32"/><use href="#i-film" x="213" y="885" width="32" height="32"/><use href="#i-door" x="213" y="929" width="32" height="32"/><use href="#i-clock" x="213" y="973" width="32" height="32"/><use href="#i-plus" x="213" y="973" width="32" height="32"/><use href="#i-wrench" x="168" y="1044" width="32" height="32"/><use href="#i-building" x="213" y="1089" width="32" height="32"/><use href="#i-card" x="213" y="1133" width="32" height="32"/><use href="#i-users" x="213" y="1177" width="32" height="32"/><use href="#i-calpen" x="213" y="1221" width="32" height="32"/><use href="#i-users" x="213" y="1265" width="32" height="32"/><use href="#i-warn" x="213" y="1265" width="32" height="32"/><use href="#i-money" x="213" y="1309" width="32" height="32"/><use href="#i-plus" x="213" y="1309" width="32" height="32"/><use href="#i-money" x="213" y="1353" width="32" height="32"/><use href="#i-minus" x="213" y="1353" width="32" height="32"/><use href="#i-box" x="213" y="1397" width="32" height="32"/><use href="#i-plus" x="213" y="1397" width="32" height="32"/><use href="#i-pagepen" x="213" y="1441" width="32" height="32"/><use href="#i-cart" x="213" y="1485" width="32" height="32"/><use href="#i-arrow" x="213" y="1485" width="32" height="32"/><use href="#i-mail" x="213" y="1529" width="32" height="32"/><use href="#i-arrow" x="213" y="1529" width="32" height="32"/><use href="#i-card" x="213" y="1573" width="32" height="32"/><use href="#i-minus" x="213" y="1573" width="32" height="32"/></svg>
<svg class="a" style="left:580px;top:518px;" width="10" height="34" viewBox="0 0 10 34"><circle cx="5" cy="7" r="2.8" fill="#999"/><circle cx="5" cy="17" r="2.8" fill="#999"/><circle cx="5" cy="27" r="2.8" fill="#999"/></svg>
<div class="a" style="left:624.5px;top:160.4px;font-size:41.5px;color:#444;font-weight:400;">Carrièredagen SV Genkgo</div>
<div class="a" style="left:624px;top:240px;width:1748px;height:76px;border:2px solid #c6c6c6;background:#d9d9d9;"></div>
<div class="a" style="left:626px;top:242px;width:189px;height:72px;background:#e7e7e7"></div>
<div class="a" style="left:814px;top:244px;width:2px;height:70px;background:#ededed"></div>
<div class="a" style="left:626px;top:242px;width:1744px;height:2px;background:#d0d0d0"></div>
<svg class="a" style="left:640px;top:260px;" width="34" height="34" viewBox="0 0 32 32"><path d="M4.5,2 L9.5,2 L8.5,7.5 Q15.5,6 16,11 Q16,17.5 8,17.5 L2,17.5Z" fill="#5a94d8"/>
<ellipse cx="10" cy="12.5" rx="2.2" ry="2.6" fill="#d8ecfa" transform="rotate(20 10 12.5)"/>
<path d="M15,14.5 L31,14.5 Q34,15 33.5,18 L32,33.5 L13,33.5 L13.5,26 Q14,22 19,21.5 L22,21.5 Q25,17.5 16,19Z" fill="#5a98e4"/>
<ellipse cx="26" cy="19.5" rx="2" ry="1.8" fill="#d8ecfa"/><ellipse cx="21" cy="28.5" rx="2.5" ry="2" fill="#c8e4fa"/>
<path d="M14,17 L20,25" stroke="#58a858" stroke-width="3"/></svg>
<div class="a" style="left:689px;top:265.3px;font-size:28px;color:#333;font-weight:400;">Vertalen</div>
<div class="a" style="left:624px;top:420px;width:1748px;height:1220px;border:2px solid #c6c6c6;background:#fff;"></div>
<div class="a" style="left:824px;top:351.5px;width:153px;height:68.5px;border:2px solid #e6e6e6;background:#f8f8f8;border-bottom:none"></div>
<div class="a" style="left:850.5px;top:373.3px;font-size:28px;color:#666;font-weight:400;">Website</div>
<div class="a" style="left:990px;top:351.5px;width:201px;height:68.5px;border:2px solid #e6e6e6;background:#f8f8f8;border-bottom:none"></div>
<div class="a" style="left:1016px;top:373.3px;font-size:28px;color:#666;font-weight:400;">Afhandeling</div>
<div class="a" style="left:1204px;top:351.5px;width:128px;height:68.5px;border:2px solid #e6e6e6;background:#f8f8f8;border-bottom:none"></div>
<div class="a" style="left:1230px;top:373.3px;font-size:28px;color:#666;font-weight:400;">Ticket</div>
<div class="a" style="left:1344px;top:351.5px;width:327px;height:68.5px;border:2px solid #e6e6e6;background:#f8f8f8;border-bottom:none"></div>
<div class="a" style="left:1371px;top:373.3px;font-size:28px;color:#666;font-weight:400;">Beheerdersmeldingen</div>
<div class="a" style="left:1683px;top:351.5px;width:200px;height:68.5px;border:2px solid #e6e6e6;background:#f8f8f8;border-bottom:none"></div>
<div class="a" style="left:1710px;top:373.3px;font-size:28px;color:#666;font-weight:400;">Besteluitleg</div>
<div class="a" style="left:624px;top:353px;width:188px;height:69px;border:2px solid #c6c6c6;background:#fff;border-bottom:none"></div>
<div class="a" style="left:650.5px;top:375.1px;font-size:28px;color:#c0703d;font-weight:700;">Algemeen</div>
<div class="a" style="left:682px;top:473.3px;font-size:28px;color:#333;font-weight:700;">EIGENSCHAPPEN</div>
<svg class="a" style="left:934px;top:476px;" width="20" height="17" viewBox="0 0 20 17"><path d="M1,16 L9.5,1 L18,16Z" fill="#111"/></svg>
<div class="a" style="left:682px;top:565.3px;font-size:28px;color:#333;font-weight:400;">Titel</div>
<div class="a" style="left:682px;top:674.9px;font-size:28px;color:#333;font-weight:400;">Organisator</div>
<div class="a" style="left:682px;top:802.6px;font-size:28px;color:#333;font-weight:400;">Verantwoordelijke</div>
<div class="a" style="left:682px;top:928.5px;font-size:28px;color:#333;font-weight:400;">Invoertaal</div>
<div class="a" style="left:682px;top:1045.6px;font-size:28px;color:#333;font-weight:400;">Afbeelding</div>
<div class="a" style="left:682px;top:1151.3px;font-size:28px;color:#333;font-weight:400;">Bestaande afbeelding</div>
<div class="a" style="left:1130px;top:545px;width:560px;height:66px;border:2px solid #cbcbcb;background:#fff;"></div>
<div class="a" style="left:1145px;top:566.3px;font-size:28px;color:#111;font-weight:400;">Carrièredagen SV Genkgo</div>
<div class="a" style="left:1130px;top:656px;width:560px;height:66px;border:2px solid #cbcbcb;background:#fff;"></div>
<div class="a" style="left:1154px;top:675.3px;font-size:28px;color:#111;font-weight:400;">Genkgo Genootschap</div>
<svg class="a" style="left:1660px;top:683px;" width="20" height="14" viewBox="0 0 20 14"><path d="M2,2.5 L9,9.5 L16,2.5" stroke="#111" stroke-width="2.6" fill="none" stroke-linecap="round" stroke-linejoin="round"/></svg>
<div class="a" style="left:1130px;top:767px;width:560px;height:97px;border:2px solid #cbcbcb;background:#fff;background:linear-gradient(to bottom,#e6e6e6 0,#fff 14px)"></div>
<div class="a" style="left:1142px;top:775px;width:415px;height:81px;background:#0aa9ad;border-radius:7px"></div>
<div class="a" style="left:1152px;top:785px;width:12px;height:2px;background:#7fc4c4"></div>
<div class="a" style="left:1183px;top:788.3px;font-size:28px;color:#fff;font-weight:400;">Evenementen organisatie</div>
<svg class="a" style="left:1185px;top:819px;" width="18" height="18" viewBox="0 0 32 32"><rect x="14.5" y="0" width="2" height="5" fill="#c04040"/>
<rect x="8" y="5" width="16" height="22" fill="#dce4ec" stroke="#8a98a8" stroke-width="1.2"/>
<path d="M11,9 L21,9 M11,12.5 L21,12.5 M11,16 L21,16" stroke="#7aa0d8" stroke-width="2"/>
<rect x="13" y="20" width="6" height="7" fill="#909090"/>
<path d="M1,30.5 Q4,22 8,26 L24,26 Q28,22 31,30.5Z" fill="#5cb04c"/></svg>
<div class="a" style="left:1220px;top:816.8px;font-size:24.3px;color:#fff;font-weight:400;">SV Genkgo</div>
<svg class="a" style="left:1365px;top:818px;" width="20" height="20" viewBox="0 0 32 32"><path d="M1,6 L12,6 L14,9 L31,9 L31,28 L1,28Z" fill="#f0d060" stroke="#c8a030" stroke-width="1.2"/><rect x="3" y="12" width="26" height="14" fill="#f8e48a"/></svg>
<div class="a" style="left:1401px;top:816.7px;font-size:24.5px;color:#fff;font-weight:400;">Commissies</div>
<div class="a" style="left:1130px;top:909px;width:560px;height:66px;border:2px solid #cbcbcb;background:#fff;"></div>
<div class="a" style="left:1154px;top:928.3px;font-size:28px;color:#111;font-weight:400;">Nederlands</div>
<svg class="a" style="left:1660px;top:936px;" width="20" height="14" viewBox="0 0 20 14"><path d="M2,2.5 L9,9.5 L16,2.5" stroke="#111" stroke-width="2.6" fill="none" stroke-linecap="round" stroke-linejoin="round"/></svg>
<div class="a" style="left:1130px;top:1020px;width:560px;height:78px;border:2px solid #cbcbcb;background:#fff;"></div>
<div class="a" style="left:1146px;top:1037px;width:141px;height:45px;border:2px solid #8f8f98;background:#e9e9ed;border-radius:8px"></div>
<div class="a" style="left:1158px;top:1045.9px;font-size:28.5px;color:#111;font-weight:400;">Browse...</div>
<div class="a" style="left:1297px;top:1045.9px;font-size:28.5px;color:#222;font-weight:400;">No file selected.</div>
<div class="a" style="left:654px;top:1556px;width:1688px;height:2px;background:#e6e6e6"></div>
<div class="a" style="left:682px;top:1580.8px;font-size:28px;color:#333;font-weight:700;">PUBLICEREN</div>
<svg class="a" style="left:873px;top:1584px;" width="20" height="17" viewBox="0 0 20 17"><path d="M1,16 L9.5,1 L18,16Z" fill="#111"/></svg>
<svg class="a" style="left:1130px;top:1120px;overflow:hidden" width="560" height="373" viewBox="0 0 560 373"><defs><linearGradient id="sky" x1="0" y1="0" x2="0" y2="1"><stop offset="0" stop-color="#cfd6d5"/><stop offset="1" stop-color="#dde1df"/></linearGradient><linearGradient id="wat" x1="0" y1="0" x2="0" y2="1"><stop offset="0" stop-color="#6a6862"/><stop offset="0.5" stop-color="#5a5a56"/><stop offset="1" stop-color="#48494a"/></linearGradient><linearGradient id="watx" x1="0" y1="0" x2="1" y2="0"><stop offset="0" stop-color="#333" stop-opacity=".35"/><stop offset=".3" stop-color="#333" stop-opacity=".1"/><stop offset=".55" stop-color="#fff" stop-opacity=".12"/><stop offset=".8" stop-color="#8a5a48" stop-opacity=".15"/><stop offset="1" stop-color="#333" stop-opacity=".1"/></linearGradient></defs><rect width="560" height="373" fill="url(#sky)"/><path d="M0,84 L24,86 L26,212 L0,214Z" fill="#e4e6e4"/><rect x="1" y="100" width="9" height="14" fill="#262828"/><path d="M5.5,100 L5.5,114 M1,105.6 L10,105.6" stroke="#d8d8d4" stroke-width="0.9" opacity=".8"/><rect x="14" y="100" width="9" height="14" fill="#262828"/><path d="M18.5,100 L18.5,114 M14,105.6 L23,105.6" stroke="#d8d8d4" stroke-width="0.9" opacity=".8"/><rect x="1" y="124" width="9" height="14" fill="#262828"/><path d="M5.5,124 L5.5,138 M1,129.6 L10,129.6" stroke="#d8d8d4" stroke-width="0.9" opacity=".8"/><rect x="14" y="124" width="9" height="14" fill="#262828"/><path d="M18.5,124 L18.5,138 M14,129.6 L23,129.6" stroke="#d8d8d4" stroke-width="0.9" opacity=".8"/><rect x="1" y="148" width="9" height="14" fill="#262828"/><path d="M5.5,148 L5.5,162 M1,153.6 L10,153.6" stroke="#d8d8d4" stroke-width="0.9" opacity=".8"/><rect x="14" y="148" width="9" height="14" fill="#262828"/><path d="M18.5,148 L18.5,162 M14,153.6 L23,153.6" stroke="#d8d8d4" stroke-width="0.9" opacity=".8"/><rect x="1" y="172" width="9" height="14" fill="#262828"/><path d="M5.5,172 L5.5,186 M1,177.6 L10,177.6" stroke="#d8d8d4" stroke-width="0.9" opacity=".8"/><rect x="14" y="172" width="9" height="14" fill="#262828"/><path d="M18.5,172 L18.5,186 M14,177.6 L23,177.6" stroke="#d8d8d4" stroke-width="0.9" opacity=".8"/><rect x="1" y="196" width="9" height="14" fill="#262828"/><path d="M5.5,196 L5.5,210 M1,201.6 L10,201.6" stroke="#d8d8d4" stroke-width="0.9" opacity=".8"/><rect x="14" y="196" width="9" height="14" fill="#262828"/><path d="M18.5,196 L18.5,210 M14,201.6 L23,201.6" stroke="#d8d8d4" stroke-width="0.9" opacity=".8"/><path d="M24,92 L34,88 L44,96 L48,215 L24,215Z" fill="#3a3232"/><rect x="27" y="112" width="6" height="12" fill="#d8d8d4"/><rect x="36" y="112" width="6" height="12" fill="#d8d8d4"/><rect x="27" y="134" width="6" height="12" fill="#d8d8d4"/><rect x="36" y="134" width="6" height="12" fill="#d8d8d4"/><rect x="27" y="156" width="6" height="12" fill="#d8d8d4"/><rect x="36" y="156" width="6" height="12" fill="#d8d8d4"/><rect x="27" y="178" width="6" height="12" fill="#d8d8d4"/><rect x="36" y="178" width="6" height="12" fill="#d8d8d4"/><rect x="27" y="200" width="6" height="12" fill="#d8d8d4"/><rect x="36" y="200" width="6" height="12" fill="#d8d8d4"/><path d="M80,100 L86,96 L96,118 L96,220 L80,220Z" fill="#2e2a2a"/><path d="M93,118 L110,124 L112,135 L140,140 L140,222 L93,222Z" fill="#4a3a36"/><rect x="96" y="138" width="6" height="10" fill="#c8c4bc"/><rect x="106" y="138" width="6" height="10" fill="#c8c4bc"/><rect x="116" y="138" width="6" height="10" fill="#c8c4bc"/><rect x="96" y="156" width="6" height="10" fill="#c8c4bc"/><rect x="106" y="156" width="6" height="10" fill="#c8c4bc"/><rect x="116" y="156" width="6" height="10" fill="#c8c4bc"/><rect x="96" y="174" width="6" height="10" fill="#c8c4bc"/><rect x="106" y="174" width="6" height="10" fill="#c8c4bc"/><rect x="116" y="174" width="6" height="10" fill="#c8c4bc"/><rect x="96" y="192" width="6" height="10" fill="#c8c4bc"/><rect x="106" y="192" width="6" height="10" fill="#c8c4bc"/><rect x="116" y="192" width="6" height="10" fill="#c8c4bc"/><path d="M122,142 L138,146 L140,175 L122,175Z" fill="#8a5a40"/><path d="M46,140 Q44,110 55,100 Q60,86 70,90 Q82,92 86,108 Q96,118 94,140 Q100,160 96,185 Q98,205 90,215 L52,218 Q40,200 44,175 Q38,160 46,140Z" fill="#46503e"/><path d="M56,112 Q62,98 72,102 Q84,112 82,140 Q70,150 60,146Z" fill="#5a6a4e" opacity=".8"/><path d="M62,150 L66,220 M78,140 L74,220" stroke="#2e2e28" stroke-width="2"/><path d="M140,150 Q145,122 165,124 Q185,118 200,130 Q214,150 208,185 Q200,215 175,218 Q150,215 142,190Z" fill="#8a9a6a"/><path d="M150,160 Q160,140 178,145 Q195,150 195,175 Q190,200 170,205 Q152,200 150,160Z" fill="#a2ae78"/><rect x="170" y="190" width="3" height="35" fill="#3a3a30"/><path d="M208,90 L262,92 L262,218 L208,218Z" fill="#ecebe8"/><rect x="212" y="107" width="12" height="15" fill="#f8f8f6"/><rect x="213" y="108" width="10" height="13" fill="#2e3030"/><path d="M218.0,108 L218.0,121 M213,113.2 L223,113.2" stroke="#f8f8f6" stroke-width="0.9" opacity=".8"/><rect x="227" y="107" width="12" height="15" fill="#f8f8f6"/><rect x="228" y="108" width="10" height="13" fill="#2e3030"/><path d="M233.0,108 L233.0,121 M228,113.2 L238,113.2" stroke="#f8f8f6" stroke-width="0.9" opacity=".8"/><rect x="242" y="107" width="12" height="15" fill="#f8f8f6"/><rect x="243" y="108" width="10" height="13" fill="#2e3030"/><path d="M248.0,108 L248.0,121 M243,113.2 L253,113.2" stroke="#f8f8f6" stroke-width="0.9" opacity=".8"/><rect x="212" y="127" width="12" height="15" fill="#f8f8f6"/><rect x="213" y="128" width="10" height="13" fill="#2e3030"/><path d="M218.0,128 L218.0,141 M213,133.2 L223,133.2" stroke="#f8f8f6" stroke-width="0.9" opacity=".8"/><rect x="227" y="127" width="12" height="15" fill="#f8f8f6"/><rect x="228" y="128" width="10" height="13" fill="#2e3030"/><path d="M233.0,128 L233.0,141 M228,133.2 L238,133.2" stroke="#f8f8f6" stroke-width="0.9" opacity=".8"/><rect x="242" y="127" width="12" height="15" fill="#f8f8f6"/><rect x="243" y="128" width="10" height="13" fill="#2e3030"/><path d="M248.0,128 L248.0,141 M243,133.2 L253,133.2" stroke="#f8f8f6" stroke-width="0.9" opacity=".8"/><rect x="212" y="147" width="12" height="15" fill="#f8f8f6"/><rect x="213" y="148" width="10" height="13" fill="#2e3030"/><path d="M218.0,148 L218.0,161 M213,153.2 L223,153.2" stroke="#f8f8f6" stroke-width="0.9" opacity=".8"/><rect x="227" y="147" width="12" height="15" fill="#f8f8f6"/><rect x="228" y="148" width="10" height="13" fill="#2e3030"/><path d="M233.0,148 L233.0,161 M228,153.2 L238,153.2" stroke="#f8f8f6" stroke-width="0.9" opacity=".8"/><rect x="242" y="147" width="12" height="15" fill="#f8f8f6"/><rect x="243" y="148" width="10" height="13" fill="#2e3030"/><path d="M248.0,148 L248.0,161 M243,153.2 L253,153.2" stroke="#f8f8f6" stroke-width="0.9" opacity=".8"/><rect x="212" y="167" width="12" height="15" fill="#f8f8f6"/><rect x="213" y="168" width="10" height="13" fill="#2e3030"/><path d="M218.0,168 L218.0,181 M213,173.2 L223,173.2" stroke="#f8f8f6" stroke-width="0.9" opacity=".8"/><rect x="227" y="167" width="12" height="15" fill="#f8f8f6"/><rect x="228" y="168" width="10" height="13" fill="#2e3030"/><path d="M233.0,168 L233.0,181 M228,173.2 L238,173.2" stroke="#f8f8f6" stroke-width="0.9" opacity=".8"/><rect x="242" y="167" width="12" height="15" fill="#f8f8f6"/><rect x="243" y="168" width="10" height="13" fill="#2e3030"/><path d="M248.0,168 L248.0,181 M243,173.2 L253,173.2" stroke="#f8f8f6" stroke-width="0.9" opacity=".8"/><rect x="213" y="182" width="10" height="16" fill="#1e2020"/><path d="M218.0,182 L218.0,198 M213,188.4 L223,188.4" stroke="#d8d8d4" stroke-width="0.9" opacity=".8"/><rect x="228" y="182" width="10" height="16" fill="#1e2020"/><path d="M233.0,182 L233.0,198 M228,188.4 L238,188.4" stroke="#d8d8d4" stroke-width="0.9" opacity=".8"/><rect x="243" y="182" width="10" height="16" fill="#1e2020"/><path d="M248.0,182 L248.0,198 M243,188.4 L253,188.4" stroke="#d8d8d4" stroke-width="0.9" opacity=".8"/><path d="M260,94 L310,94 L310,218 L260,218Z" fill="#c4aaa6"/><rect x="264" y="107" width="11" height="15" fill="#eee"/><rect x="265" y="108" width="9" height="13" fill="#262626"/><path d="M269.5,108 L269.5,121 M265,113.2 L274,113.2" stroke="#eee" stroke-width="0.9" opacity=".8"/><rect x="279" y="107" width="11" height="15" fill="#eee"/><rect x="280" y="108" width="9" height="13" fill="#262626"/><path d="M284.5,108 L284.5,121 M280,113.2 L289,113.2" stroke="#eee" stroke-width="0.9" opacity=".8"/><rect x="294" y="107" width="11" height="15" fill="#eee"/><rect x="295" y="108" width="9" height="13" fill="#262626"/><path d="M299.5,108 L299.5,121 M295,113.2 L304,113.2" stroke="#eee" stroke-width="0.9" opacity=".8"/><rect x="264" y="127" width="11" height="15" fill="#eee"/><rect x="265" y="128" width="9" height="13" fill="#262626"/><path d="M269.5,128 L269.5,141 M265,133.2 L274,133.2" stroke="#eee" stroke-width="0.9" opacity=".8"/><rect x="279" y="127" width="11" height="15" fill="#eee"/><rect x="280" y="128" width="9" height="13" fill="#262626"/><path d="M284.5,128 L284.5,141 M280,133.2 L289,133.2" stroke="#eee" stroke-width="0.9" opacity=".8"/><rect x="294" y="127" width="11" height="15" fill="#eee"/><rect x="295" y="128" width="9" height="13" fill="#262626"/><path d="M299.5,128 L299.5,141 M295,133.2 L304,133.2" stroke="#eee" stroke-width="0.9" opacity=".8"/><rect x="264" y="147" width="11" height="15" fill="#eee"/><rect x="265" y="148" width="9" height="13" fill="#262626"/><path d="M269.5,148 L269.5,161 M265,153.2 L274,153.2" stroke="#eee" stroke-width="0.9" opacity=".8"/><rect x="279" y="147" width="11" height="15" fill="#eee"/><rect x="280" y="148" width="9" height="13" fill="#262626"/><path d="M284.5,148 L284.5,161 M280,153.2 L289,153.2" stroke="#eee" stroke-width="0.9" opacity=".8"/><rect x="294" y="147" width="11" height="15" fill="#eee"/><rect x="295" y="148" width="9" height="13" fill="#262626"/><path d="M299.5,148 L299.5,161 M295,153.2 L304,153.2" stroke="#eee" stroke-width="0.9" opacity=".8"/><rect x="264" y="167" width="11" height="15" fill="#eee"/><rect x="265" y="168" width="9" height="13" fill="#262626"/><path d="M269.5,168 L269.5,181 M265,173.2 L274,173.2" stroke="#eee" stroke-width="0.9" opacity=".8"/><rect x="279" y="167" width="11" height="15" fill="#eee"/><rect x="280" y="168" width="9" height="13" fill="#262626"/><path d="M284.5,168 L284.5,181 M280,173.2 L289,173.2" stroke="#eee" stroke-width="0.9" opacity=".8"/><rect x="294" y="167" width="11" height="15" fill="#eee"/><rect x="295" y="168" width="9" height="13" fill="#262626"/><path d="M299.5,168 L299.5,181 M295,173.2 L304,173.2" stroke="#eee" stroke-width="0.9" opacity=".8"/><rect x="264" y="187" width="11" height="15" fill="#eee"/><rect x="265" y="188" width="9" height="13" fill="#262626"/><path d="M269.5,188 L269.5,201 M265,193.2 L274,193.2" stroke="#eee" stroke-width="0.9" opacity=".8"/><rect x="279" y="187" width="11" height="15" fill="#eee"/><rect x="280" y="188" width="9" height="13" fill="#262626"/><path d="M284.5,188 L284.5,201 M280,193.2 L289,193.2" stroke="#eee" stroke-width="0.9" opacity=".8"/><rect x="294" y="187" width="11" height="15" fill="#eee"/><rect x="295" y="188" width="9" height="13" fill="#262626"/><path d="M299.5,188 L299.5,201 M295,193.2 L304,193.2" stroke="#eee" stroke-width="0.9" opacity=".8"/><path d="M308,141 L334,111 L362,141 L362,222 L308,222Z" fill="#3a4141"/><rect x="314" y="148" width="6" height="10" fill="#e8e8e8"/><rect x="314" y="168" width="6" height="10" fill="#e8e8e8"/><rect x="314" y="188" width="6" height="10" fill="#e8e8e8"/><rect x="314" y="208" width="6" height="10" fill="#e8e8e8"/><rect x="349" y="148" width="6" height="10" fill="#e8e8e8"/><rect x="349" y="168" width="6" height="10" fill="#e8e8e8"/><rect x="349" y="188" width="6" height="10" fill="#e8e8e8"/><rect x="349" y="208" width="6" height="10" fill="#e8e8e8"/><rect x="325" y="139" width="16" height="18" fill="#f0f0f0"/><rect x="326" y="140" width="14" height="16" fill="#181a1a"/><path d="M333.0,140 L333.0,156 M326,146.4 L340,146.4" stroke="#f0f0f0" stroke-width="0.9" opacity=".8"/><rect x="325" y="159" width="16" height="18" fill="#f0f0f0"/><rect x="326" y="160" width="14" height="16" fill="#181a1a"/><path d="M333.0,160 L333.0,176 M326,166.4 L340,166.4" stroke="#f0f0f0" stroke-width="0.9" opacity=".8"/><rect x="325" y="179" width="16" height="18" fill="#f0f0f0"/><rect x="326" y="180" width="14" height="16" fill="#181a1a"/><path d="M333.0,180 L333.0,196 M326,186.4 L340,186.4" stroke="#f0f0f0" stroke-width="0.9" opacity=".8"/><rect x="325" y="199" width="16" height="18" fill="#f0f0f0"/><rect x="326" y="200" width="14" height="16" fill="#181a1a"/><path d="M333.0,200 L333.0,216 M326,206.4 L340,206.4" stroke="#f0f0f0" stroke-width="0.9" opacity=".8"/><path d="M318,209 Q320,194 335,193 Q350,194 352,209Z" fill="#5a7a4a"/><path d="M358,94 L364,78 L402,78 L410,94 L410,222 L358,222Z" fill="#efeeeb"/><path d="M364,80 L375,80 L373,92 L364,92Z" fill="#5a5e60"/><path d="M392,80 L402,80 L406,92 L394,92Z" fill="#5a5e60"/><rect x="380" y="80" width="8" height="10" fill="#2a2c2c"/><path d="M384.0,80 L384.0,90 M380,84.0 L388,84.0" stroke="#d8d8d4" stroke-width="0.9" opacity=".8"/><rect x="365" y="110" width="9" height="12" fill="#1e2020"/><path d="M369.5,110 L369.5,122 M365,114.8 L374,114.8" stroke="#d8d8d4" stroke-width="0.9" opacity=".8"/><rect x="380" y="110" width="9" height="12" fill="#1e2020"/><path d="M384.5,110 L384.5,122 M380,114.8 L389,114.8" stroke="#d8d8d4" stroke-width="0.9" opacity=".8"/><rect x="395" y="110" width="9" height="12" fill="#1e2020"/><path d="M399.5,110 L399.5,122 M395,114.8 L404,114.8" stroke="#d8d8d4" stroke-width="0.9" opacity=".8"/><rect x="365" y="131" width="9" height="12" fill="#1e2020"/><path d="M369.5,131 L369.5,143 M365,135.8 L374,135.8" stroke="#d8d8d4" stroke-width="0.9" opacity=".8"/><rect x="380" y="131" width="9" height="12" fill="#1e2020"/><path d="M384.5,131 L384.5,143 M380,135.8 L389,135.8" stroke="#d8d8d4" stroke-width="0.9" opacity=".8"/><rect x="395" y="131" width="9" height="12" fill="#1e2020"/><path d="M399.5,131 L399.5,143 M395,135.8 L404,135.8" stroke="#d8d8d4" stroke-width="0.9" opacity=".8"/><rect x="365" y="152" width="9" height="12" fill="#1e2020"/><path d="M369.5,152 L369.5,164 M365,156.8 L374,156.8" stroke="#d8d8d4" stroke-width="0.9" opacity=".8"/><rect x="380" y="152" width="9" height="12" fill="#1e2020"/><path d="M384.5,152 L384.5,164 M380,156.8 L389,156.8" stroke="#d8d8d4" stroke-width="0.9" opacity=".8"/><rect x="395" y="152" width="9" height="12" fill="#1e2020"/><path d="M399.5,152 L399.5,164 M395,156.8 L404,156.8" stroke="#d8d8d4" stroke-width="0.9" opacity=".8"/><rect x="365" y="173" width="9" height="12" fill="#1e2020"/><path d="M369.5,173 L369.5,185 M365,177.8 L374,177.8" stroke="#d8d8d4" stroke-width="0.9" opacity=".8"/><rect x="380" y="173" width="9" height="12" fill="#1e2020"/><path d="M384.5,173 L384.5,185 M380,177.8 L389,177.8" stroke="#d8d8d4" stroke-width="0.9" opacity=".8"/><rect x="395" y="173" width="9" height="12" fill="#1e2020"/><path d="M399.5,173 L399.5,185 M395,177.8 L404,177.8" stroke="#d8d8d4" stroke-width="0.9" opacity=".8"/><rect x="366" y="196" width="8" height="20" fill="#2a2c2c"/><path d="M370.0,196 L370.0,216 M366,204.0 L374,204.0" stroke="#d8d8d4" stroke-width="0.9" opacity=".8"/><rect x="381" y="196" width="8" height="20" fill="#2a2c2c"/><path d="M385.0,196 L385.0,216 M381,204.0 L389,204.0" stroke="#d8d8d4" stroke-width="0.9" opacity=".8"/><rect x="396" y="196" width="8" height="20" fill="#2a2c2c"/><path d="M400.0,196 L400.0,216 M396,204.0 L404,204.0" stroke="#d8d8d4" stroke-width="0.9" opacity=".8"/><rect x="464" y="192" width="8" height="20" fill="#2a2c2c"/><path d="M468.0,192 L468.0,212 M464,200.0 L472,200.0" stroke="#d8d8d4" stroke-width="0.9" opacity=".8"/><rect x="478" y="192" width="8" height="20" fill="#2a2c2c"/><path d="M482.0,192 L482.0,212 M478,200.0 L486,200.0" stroke="#d8d8d4" stroke-width="0.9" opacity=".8"/><rect x="492" y="192" width="8" height="20" fill="#2a2c2c"/><path d="M496.0,192 L496.0,212 M492,200.0 L500,200.0" stroke="#d8d8d4" stroke-width="0.9" opacity=".8"/><rect x="414" y="206" width="8" height="16" fill="#2a2c2c"/><path d="M418.0,206 L418.0,222 M414,212.4 L422,212.4" stroke="#d8d8d4" stroke-width="0.9" opacity=".8"/><rect x="429" y="206" width="8" height="16" fill="#2a2c2c"/><path d="M433.0,206 L433.0,222 M429,212.4 L437,212.4" stroke="#d8d8d4" stroke-width="0.9" opacity=".8"/><rect x="444" y="206" width="8" height="16" fill="#2a2c2c"/><path d="M448.0,206 L448.0,222 M444,212.4 L452,212.4" stroke="#d8d8d4" stroke-width="0.9" opacity=".8"/><path d="M409,84 L457,84 L457,222 L409,222Z" fill="#b07a66"/><rect x="409" y="84" width="48" height="10" fill="#e0dcd8"/><rect x="413" y="119" width="11" height="15" fill="#ddd"/><rect x="414" y="120" width="9" height="13" fill="#3a3a30"/><path d="M418.5,120 L418.5,133 M414,125.2 L423,125.2" stroke="#ddd" stroke-width="0.9" opacity=".8"/><rect x="428" y="119" width="11" height="15" fill="#ddd"/><rect x="429" y="120" width="9" height="13" fill="#3a3a30"/><path d="M433.5,120 L433.5,133 M429,125.2 L438,125.2" stroke="#ddd" stroke-width="0.9" opacity=".8"/><rect x="443" y="119" width="11" height="15" fill="#ddd"/><rect x="444" y="120" width="9" height="13" fill="#3a3a30"/><path d="M448.5,120 L448.5,133 M444,125.2 L453,125.2" stroke="#ddd" stroke-width="0.9" opacity=".8"/><rect x="413" y="140" width="11" height="15" fill="#ddd"/><rect x="414" y="141" width="9" height="13" fill="#3a3a30"/><path d="M418.5,141 L418.5,154 M414,146.2 L423,146.2" stroke="#ddd" stroke-width="0.9" opacity=".8"/><rect x="428" y="140" width="11" height="15" fill="#ddd"/><rect x="429" y="141" width="9" height="13" fill="#3a3a30"/><path d="M433.5,141 L433.5,154 M429,146.2 L438,146.2" stroke="#ddd" stroke-width="0.9" opacity=".8"/><rect x="443" y="140" width="11" height="15" fill="#ddd"/><rect x="444" y="141" width="9" height="13" fill="#3a3a30"/><path d="M448.5,141 L448.5,154 M444,146.2 L453,146.2" stroke="#ddd" stroke-width="0.9" opacity=".8"/><rect x="413" y="161" width="11" height="15" fill="#ddd"/><rect x="414" y="162" width="9" height="13" fill="#3a3a30"/><path d="M418.5,162 L418.5,175 M414,167.2 L423,167.2" stroke="#ddd" stroke-width="0.9" opacity=".8"/><rect x="428" y="161" width="11" height="15" fill="#ddd"/><rect x="429" y="162" width="9" height="13" fill="#3a3a30"/><path d="M433.5,162 L433.5,175 M429,167.2 L438,167.2" stroke="#ddd" stroke-width="0.9" opacity=".8"/><rect x="443" y="161" width="11" height="15" fill="#ddd"/><rect x="444" y="162" width="9" height="13" fill="#3a3a30"/><path d="M448.5,162 L448.5,175 M444,167.2 L453,167.2" stroke="#ddd" stroke-width="0.9" opacity=".8"/><rect x="413" y="182" width="11" height="15" fill="#ddd"/><rect x="414" y="183" width="9" height="13" fill="#3a3a30"/><path d="M418.5,183 L418.5,196 M414,188.2 L423,188.2" stroke="#ddd" stroke-width="0.9" opacity=".8"/><rect x="428" y="182" width="11" height="15" fill="#ddd"/><rect x="429" y="183" width="9" height="13" fill="#3a3a30"/><path d="M433.5,183 L433.5,196 M429,188.2 L438,188.2" stroke="#ddd" stroke-width="0.9" opacity=".8"/><rect x="443" y="182" width="11" height="15" fill="#ddd"/><rect x="444" y="183" width="9" height="13" fill="#3a3a30"/><path d="M448.5,183 L448.5,196 M444,188.2 L453,188.2" stroke="#ddd" stroke-width="0.9" opacity=".8"/><path d="M432,100 L434,225" stroke="#5a4030" stroke-width="2"/><path d="M420,120 Q434,150 448,115" stroke="#a86848" stroke-width="3" fill="none"/><path d="M460,136 L470,118 L484,103 L498,118 L507,136 L507,222 L460,222Z" fill="#a47e74"/><rect x="463" y="137" width="11" height="14" fill="#eee"/><rect x="464" y="138" width="9" height="12" fill="#2a2a28"/><path d="M468.5,138 L468.5,150 M464,142.8 L473,142.8" stroke="#eee" stroke-width="0.9" opacity=".8"/><rect x="477" y="137" width="11" height="14" fill="#eee"/><rect x="478" y="138" width="9" height="12" fill="#2a2a28"/><path d="M482.5,138 L482.5,150 M478,142.8 L487,142.8" stroke="#eee" stroke-width="0.9" opacity=".8"/><rect x="491" y="137" width="11" height="14" fill="#eee"/><rect x="492" y="138" width="9" height="12" fill="#2a2a28"/><path d="M496.5,138 L496.5,150 M492,142.8 L501,142.8" stroke="#eee" stroke-width="0.9" opacity=".8"/><rect x="463" y="157" width="11" height="14" fill="#eee"/><rect x="464" y="158" width="9" height="12" fill="#2a2a28"/><path d="M468.5,158 L468.5,170 M464,162.8 L473,162.8" stroke="#eee" stroke-width="0.9" opacity=".8"/><rect x="477" y="157" width="11" height="14" fill="#eee"/><rect x="478" y="158" width="9" height="12" fill="#2a2a28"/><path d="M482.5,158 L482.5,170 M478,162.8 L487,162.8" stroke="#eee" stroke-width="0.9" opacity=".8"/><rect x="491" y="157" width="11" height="14" fill="#eee"/><rect x="492" y="158" width="9" height="12" fill="#2a2a28"/><path d="M496.5,158 L496.5,170 M492,162.8 L501,162.8" stroke="#eee" stroke-width="0.9" opacity=".8"/><rect x="463" y="177" width="11" height="14" fill="#eee"/><rect x="464" y="178" width="9" height="12" fill="#2a2a28"/><path d="M468.5,178 L468.5,190 M464,182.8 L473,182.8" stroke="#eee" stroke-width="0.9" opacity=".8"/><rect x="477" y="177" width="11" height="14" fill="#eee"/><rect x="478" y="178" width="9" height="12" fill="#2a2a28"/><path d="M482.5,178 L482.5,190 M478,182.8 L487,182.8" stroke="#eee" stroke-width="0.9" opacity=".8"/><rect x="491" y="177" width="11" height="14" fill="#eee"/><rect x="492" y="178" width="9" height="12" fill="#2a2a28"/><path d="M496.5,178 L496.5,190 M492,182.8 L501,182.8" stroke="#eee" stroke-width="0.9" opacity=".8"/><rect x="460" y="196" width="47" height="26" fill="#e4e2de"/><rect x="466" y="200" width="9" height="16" fill="#222"/><path d="M470.5,200 L470.5,216 M466,206.4 L475,206.4" stroke="#d8d8d4" stroke-width="0.9" opacity=".8"/><rect x="480" y="200" width="9" height="16" fill="#222"/><path d="M484.5,200 L484.5,216 M480,206.4 L489,206.4" stroke="#d8d8d4" stroke-width="0.9" opacity=".8"/><rect x="494" y="200" width="9" height="16" fill="#222"/><path d="M498.5,200 L498.5,216 M494,206.4 L503,206.4" stroke="#d8d8d4" stroke-width="0.9" opacity=".8"/><path d="M507,138 L520,106 L556,106 L560,112 L560,138Z" fill="#8a6a5e"/><path d="M507,138 L560,138 L560,222 L507,222Z" fill="#eeedeb"/><rect x="512" y="146" width="7" height="10" fill="#2a2a2a"/><path d="M515.5,146 L515.5,156 M512,150.0 L519,150.0" stroke="#d8d8d4" stroke-width="0.9" opacity=".8"/><rect x="529" y="146" width="7" height="10" fill="#2a2a2a"/><path d="M532.5,146 L532.5,156 M529,150.0 L536,150.0" stroke="#d8d8d4" stroke-width="0.9" opacity=".8"/><rect x="546" y="146" width="7" height="10" fill="#2a2a2a"/><path d="M549.5,146 L549.5,156 M546,150.0 L553,150.0" stroke="#d8d8d4" stroke-width="0.9" opacity=".8"/><rect x="512" y="165" width="7" height="10" fill="#2a2a2a"/><path d="M515.5,165 L515.5,175 M512,169.0 L519,169.0" stroke="#d8d8d4" stroke-width="0.9" opacity=".8"/><rect x="529" y="165" width="7" height="10" fill="#2a2a2a"/><path d="M532.5,165 L532.5,175 M529,169.0 L536,169.0" stroke="#d8d8d4" stroke-width="0.9" opacity=".8"/><rect x="546" y="165" width="7" height="10" fill="#2a2a2a"/><path d="M549.5,165 L549.5,175 M546,169.0 L553,169.0" stroke="#d8d8d4" stroke-width="0.9" opacity=".8"/><rect x="512" y="184" width="7" height="10" fill="#2a2a2a"/><path d="M515.5,184 L515.5,194 M512,188.0 L519,188.0" stroke="#d8d8d4" stroke-width="0.9" opacity=".8"/><rect x="529" y="184" width="7" height="10" fill="#2a2a2a"/><path d="M532.5,184 L532.5,194 M529,188.0 L536,188.0" stroke="#d8d8d4" stroke-width="0.9" opacity=".8"/><rect x="546" y="184" width="7" height="10" fill="#2a2a2a"/><path d="M549.5,184 L549.5,194 M546,188.0 L553,188.0" stroke="#d8d8d4" stroke-width="0.9" opacity=".8"/><rect x="512" y="203" width="7" height="10" fill="#2a2a2a"/><path d="M515.5,203 L515.5,213 M512,207.0 L519,207.0" stroke="#d8d8d4" stroke-width="0.9" opacity=".8"/><rect x="529" y="203" width="7" height="10" fill="#2a2a2a"/><path d="M532.5,203 L532.5,213 M529,207.0 L536,207.0" stroke="#d8d8d4" stroke-width="0.9" opacity=".8"/><rect x="546" y="203" width="7" height="10" fill="#2a2a2a"/><path d="M549.5,203 L549.5,213 M546,207.0 L553,207.0" stroke="#d8d8d4" stroke-width="0.9" opacity=".8"/><path d="M134,222 L560,222 L560,234 L134,234Z" fill="#8a7066"/><path d="M209,208 L356,210 L356,234 L209,234Z" fill="#a08a80"/><rect x="209" y="208" width="147" height="3" fill="#c8bcb4"/><rect x="238" y="214" width="5" height="9" fill="#2a2a2a"/><rect x="245" y="214" width="5" height="9" fill="#2a2a2a"/><rect x="252" y="214" width="5" height="9" fill="#2a2a2a"/><rect x="273" y="214" width="5" height="9" fill="#2a2a2a"/><rect x="280" y="214" width="5" height="9" fill="#2a2a2a"/><rect x="311" y="214" width="7" height="9" fill="#2a2a2a"/><path d="M314.5,214 L314.5,223 M311,217.6 L318,217.6" stroke="#d8d8d4" stroke-width="0.9" opacity=".8"/><rect x="320" y="214" width="7" height="9" fill="#2a2a2a"/><path d="M323.5,214 L323.5,223 M320,217.6 L327,217.6" stroke="#d8d8d4" stroke-width="0.9" opacity=".8"/><path d="M0,212 L96,214 L96,228 Q60,238 0,237Z" fill="#e8e8e6"/><rect x="0" y="212" width="24" height="10" fill="#b83a2e"/><path d="M0,228 L95,224" stroke="#333" stroke-width="1.5"/><path d="M95,216 L138,215 L138,227 L95,229Z" fill="#dcdcd8"/><path d="M95,227 L138,225" stroke="#333" stroke-width="2"/><path d="M330,212 L340,206 L362,206 L372,214 L372,221 L330,221Z" fill="#ecebe8"/><rect x="342" y="208" width="14" height="4" fill="#9aa0a4"/><path d="M452,212 L470,198 L490,200 L495,212 L558,212 L556,226 Q520,232 465,231 Q455,226 452,212Z" fill="#ecebea"/><path d="M462,224 L556,220 L554,230 L466,232Z" fill="#2a2a3a"/><defs><linearGradient id="wh" x1="0" y1="0" x2="1" y2="0"><stop offset="0" stop-color="#585c59"/><stop offset=".18" stop-color="#5c605c"/><stop offset=".32" stop-color="#767873"/><stop offset=".42" stop-color="#8e8f8a"/><stop offset=".55" stop-color="#969690"/><stop offset=".68" stop-color="#85837e"/><stop offset=".74" stop-color="#7e665a"/><stop offset=".81" stop-color="#7a6a60"/><stop offset=".87" stop-color="#868784"/><stop offset="1" stop-color="#7c7f7d"/></linearGradient><linearGradient id="wv" x1="0" y1="0" x2="0" y2="1"><stop offset="0" stop-color="#6a665e" stop-opacity=".35"/><stop offset=".3" stop-color="#000" stop-opacity="0"/><stop offset="1" stop-color="#28303a" stop-opacity=".35"/></linearGradient></defs><rect x="0" y="234" width="560" height="139" fill="url(#wh)"/><rect x="0" y="234" width="560" height="139" fill="url(#wv)"/><rect x="168" y="237.1" width="10" height="1.6" fill="#b4b4ae" opacity="0.17"/><rect x="192" y="236.9" width="7" height="1.6" fill="#2e3232" opacity="0.21"/><rect x="21" y="236.2" width="8" height="1.6" fill="#2e3232" opacity="0.45"/><rect x="109" y="236.8" width="21" height="1.6" fill="#b4b4ae" opacity="0.29"/><rect x="546" y="236.3" width="7" height="1.6" fill="#b4b4ae" opacity="0.22"/><rect x="48" y="237.2" width="13" height="1.6" fill="#b4b4ae" opacity="0.20"/><rect x="351" y="236.1" width="15" height="1.6" fill="#2e3232" opacity="0.22"/><rect x="99" y="237.2" width="22" height="1.6" fill="#2e3232" opacity="0.29"/><rect x="243" y="236.5" width="13" height="1.6" fill="#b4b4ae" opacity="0.32"/><rect x="313" y="236.6" width="19" height="1.6" fill="#b4b4ae" opacity="0.33"/><rect x="549" y="236.3" width="9" height="1.6" fill="#2e3232" opacity="0.43"/><rect x="264" y="237.1" width="7" height="1.6" fill="#b4b4ae" opacity="0.34"/><rect x="488" y="237.2" width="14" height="1.6" fill="#b4b4ae" opacity="0.30"/><rect x="245" y="237.3" width="26" height="1.6" fill="#b4b4ae" opacity="0.27"/><rect x="15" y="240.6" width="23" height="1.6" fill="#b4b4ae" opacity="0.40"/><rect x="145" y="239.9" width="15" height="1.6" fill="#b4b4ae" opacity="0.16"/><rect x="77" y="239.3" width="9" height="1.6" fill="#2e3232" opacity="0.43"/><rect x="124" y="239.9" width="15" height="1.6" fill="#b4b4ae" opacity="0.17"/><rect x="299" y="239.6" width="27" height="1.6" fill="#b4b4ae" opacity="0.37"/><rect x="221" y="239.3" width="15" height="1.6" fill="#b4b4ae" opacity="0.39"/><rect x="82" y="240.2" width="12" height="1.6" fill="#2e3232" opacity="0.35"/><rect x="132" y="240.1" width="6" height="1.6" fill="#2e3232" opacity="0.31"/><rect x="533" y="240.4" width="23" height="1.6" fill="#2e3232" opacity="0.39"/><rect x="11" y="240.6" width="28" height="1.6" fill="#b4b4ae" opacity="0.37"/><rect x="208" y="239.1" width="16" height="1.6" fill="#2e3232" opacity="0.39"/><rect x="19" y="239.1" width="11" height="1.6" fill="#2e3232" opacity="0.30"/><rect x="-20" y="239.1" width="10" height="1.6" fill="#2e3232" opacity="0.31"/><rect x="487" y="239.7" width="21" height="1.6" fill="#2e3232" opacity="0.28"/><rect x="191" y="242.9" width="9" height="1.6" fill="#b4b4ae" opacity="0.40"/><rect x="261" y="242.5" width="8" height="1.6" fill="#2e3232" opacity="0.30"/><rect x="461" y="243.1" width="10" height="1.6" fill="#2e3232" opacity="0.49"/><rect x="65" y="244.0" width="19" height="1.6" fill="#2e3232" opacity="0.36"/><rect x="481" y="242.3" width="23" height="1.6" fill="#2e3232" opacity="0.31"/><rect x="428" y="242.4" width="19" height="1.6" fill="#b4b4ae" opacity="0.23"/><rect x="451" y="243.6" width="30" height="1.6" fill="#b4b4ae" opacity="0.35"/><rect x="409" y="242.1" width="11" height="1.6" fill="#2e3232" opacity="0.31"/><rect x="-4" y="243.9" width="13" height="1.6" fill="#2e3232" opacity="0.41"/><rect x="239" y="242.7" width="28" height="1.6" fill="#b4b4ae" opacity="0.39"/><rect x="108" y="243.2" width="11" height="1.6" fill="#2e3232" opacity="0.26"/><rect x="502" y="243.6" width="26" height="1.6" fill="#2e3232" opacity="0.40"/><rect x="29" y="243.5" width="22" height="1.6" fill="#b4b4ae" opacity="0.35"/><rect x="257" y="243.6" width="10" height="1.6" fill="#b4b4ae" opacity="0.23"/><rect x="544" y="246.4" width="16" height="1.6" fill="#2e3232" opacity="0.48"/><rect x="79" y="246.6" width="9" height="1.6" fill="#2e3232" opacity="0.47"/><rect x="65" y="245.7" width="26" height="1.6" fill="#b4b4ae" opacity="0.31"/><rect x="298" y="246.3" width="9" height="1.6" fill="#2e3232" opacity="0.49"/><rect x="285" y="246.7" width="28" height="1.6" fill="#2e3232" opacity="0.46"/><rect x="102" y="246.2" width="12" height="1.6" fill="#2e3232" opacity="0.27"/><rect x="130" y="245.7" width="16" height="1.6" fill="#2e3232" opacity="0.47"/><rect x="246" y="246.8" width="20" height="1.6" fill="#b4b4ae" opacity="0.26"/><rect x="271" y="245.9" width="19" height="1.6" fill="#2e3232" opacity="0.21"/><rect x="86" y="245.9" width="6" height="1.6" fill="#b4b4ae" opacity="0.19"/><rect x="401" y="246.1" width="19" height="1.6" fill="#2e3232" opacity="0.36"/><rect x="435" y="245.6" width="9" height="1.6" fill="#b4b4ae" opacity="0.21"/><rect x="428" y="246.8" width="18" height="1.6" fill="#b4b4ae" opacity="0.34"/><rect x="237" y="246.4" width="21" height="1.6" fill="#2e3232" opacity="0.35"/><rect x="242" y="249.4" width="19" height="1.6" fill="#2e3232" opacity="0.48"/><rect x="488" y="249.9" width="29" height="1.6" fill="#2e3232" opacity="0.37"/><rect x="467" y="248.1" width="9" height="1.6" fill="#2e3232" opacity="0.33"/><rect x="120" y="249.8" width="8" height="1.6" fill="#b4b4ae" opacity="0.35"/><rect x="70" y="249.8" width="23" height="1.6" fill="#b4b4ae" opacity="0.19"/><rect x="541" y="249.0" width="11" height="1.6" fill="#b4b4ae" opacity="0.25"/><rect x="554" y="249.0" width="26" height="1.6" fill="#2e3232" opacity="0.33"/><rect x="177" y="248.0" width="11" height="1.6" fill="#2e3232" opacity="0.42"/><rect x="301" y="249.2" width="17" height="1.6" fill="#2e3232" opacity="0.30"/><rect x="277" y="249.9" width="8" height="1.6" fill="#b4b4ae" opacity="0.35"/><rect x="41" y="248.5" width="12" height="1.6" fill="#2e3232" opacity="0.43"/><rect x="55" y="248.5" width="16" height="1.6" fill="#b4b4ae" opacity="0.35"/><rect x="67" y="248.2" width="28" height="1.6" fill="#b4b4ae" opacity="0.33"/><rect x="13" y="249.9" width="23" height="1.6" fill="#2e3232" opacity="0.22"/><rect x="348" y="251.1" width="25" height="1.6" fill="#2e3232" opacity="0.46"/><rect x="480" y="252.9" width="17" height="1.6" fill="#2e3232" opacity="0.37"/><rect x="135" y="251.2" width="9" height="1.6" fill="#2e3232" opacity="0.27"/><rect x="74" y="251.6" width="7" height="1.6" fill="#2e3232" opacity="0.29"/><rect x="421" y="251.7" width="13" height="1.6" fill="#2e3232" opacity="0.25"/><rect x="-9" y="252.1" width="12" height="1.6" fill="#2e3232" opacity="0.42"/><rect x="90" y="252.6" width="17" height="1.6" fill="#b4b4ae" opacity="0.18"/><rect x="231" y="252.0" width="18" height="1.6" fill="#b4b4ae" opacity="0.25"/><rect x="379" y="252.4" width="30" height="1.6" fill="#2e3232" opacity="0.45"/><rect x="349" y="251.3" width="16" height="1.6" fill="#2e3232" opacity="0.22"/><rect x="21" y="251.2" width="24" height="1.6" fill="#2e3232" opacity="0.25"/><rect x="468" y="251.5" width="27" height="1.6" fill="#b4b4ae" opacity="0.22"/><rect x="150" y="251.5" width="17" height="1.6" fill="#2e3232" opacity="0.33"/><rect x="538" y="252.9" width="29" height="1.6" fill="#2e3232" opacity="0.27"/><rect x="160" y="254.9" width="15" height="1.6" fill="#2e3232" opacity="0.31"/><rect x="272" y="254.5" width="11" height="1.6" fill="#2e3232" opacity="0.20"/><rect x="32" y="254.6" width="16" height="1.6" fill="#2e3232" opacity="0.21"/><rect x="115" y="255.3" width="20" height="1.6" fill="#2e3232" opacity="0.43"/><rect x="395" y="256.0" width="27" height="1.6" fill="#2e3232" opacity="0.30"/><rect x="67" y="255.7" width="23" height="1.6" fill="#b4b4ae" opacity="0.16"/><rect x="497" y="254.3" width="21" height="1.6" fill="#b4b4ae" opacity="0.35"/><rect x="284" y="255.7" width="18" height="1.6" fill="#b4b4ae" opacity="0.35"/><rect x="319" y="254.5" width="27" height="1.6" fill="#b4b4ae" opacity="0.32"/><rect x="-2" y="255.7" width="9" height="1.6" fill="#2e3232" opacity="0.23"/><rect x="304" y="255.0" width="21" height="1.6" fill="#b4b4ae" opacity="0.32"/><rect x="-18" y="255.1" width="25" height="1.6" fill="#b4b4ae" opacity="0.28"/><rect x="362" y="254.1" width="8" height="1.6" fill="#b4b4ae" opacity="0.21"/><rect x="134" y="256.0" width="24" height="1.6" fill="#2e3232" opacity="0.42"/><rect x="266" y="258.5" width="15" height="1.6" fill="#2e3232" opacity="0.41"/><rect x="338" y="257.5" width="21" height="1.6" fill="#2e3232" opacity="0.24"/><rect x="411" y="257.1" width="13" height="1.6" fill="#b4b4ae" opacity="0.15"/><rect x="136" y="257.6" width="22" height="1.6" fill="#b4b4ae" opacity="0.32"/><rect x="280" y="258.8" width="17" height="1.6" fill="#2e3232" opacity="0.24"/><rect x="96" y="257.9" width="29" height="1.6" fill="#b4b4ae" opacity="0.15"/><rect x="456" y="257.4" width="29" height="1.6" fill="#2e3232" opacity="0.28"/><rect x="528" y="258.0" width="11" height="1.6" fill="#b4b4ae" opacity="0.19"/><rect x="533" y="258.8" width="9" height="1.6" fill="#b4b4ae" opacity="0.28"/><rect x="388" y="257.0" width="12" height="1.6" fill="#b4b4ae" opacity="0.27"/><rect x="-18" y="257.3" width="18" height="1.6" fill="#2e3232" opacity="0.29"/><rect x="179" y="258.5" width="14" height="1.6" fill="#b4b4ae" opacity="0.15"/><rect x="467" y="258.8" width="9" height="1.6" fill="#b4b4ae" opacity="0.33"/><rect x="148" y="258.2" width="15" height="1.6" fill="#2e3232" opacity="0.50"/><rect x="189" y="260.2" width="16" height="1.6" fill="#2e3232" opacity="0.21"/><rect x="464" y="260.5" width="13" height="1.6" fill="#b4b4ae" opacity="0.21"/><rect x="276" y="261.8" width="11" height="1.6" fill="#2e3232" opacity="0.49"/><rect x="451" y="261.1" width="21" height="1.6" fill="#b4b4ae" opacity="0.39"/><rect x="397" y="261.5" width="7" height="1.6" fill="#b4b4ae" opacity="0.26"/><rect x="354" y="260.3" width="13" height="1.6" fill="#2e3232" opacity="0.48"/><rect x="254" y="262.0" width="14" height="1.6" fill="#2e3232" opacity="0.42"/><rect x="131" y="260.8" width="22" height="1.6" fill="#2e3232" opacity="0.37"/><rect x="77" y="261.0" width="10" height="1.6" fill="#2e3232" opacity="0.47"/><rect x="108" y="260.3" width="28" height="1.6" fill="#b4b4ae" opacity="0.26"/><rect x="92" y="260.5" width="8" height="1.6" fill="#2e3232" opacity="0.23"/><rect x="130" y="260.8" width="20" height="1.6" fill="#b4b4ae" opacity="0.34"/><rect x="220" y="260.1" width="19" height="1.6" fill="#2e3232" opacity="0.30"/><rect x="141" y="261.3" width="29" height="1.6" fill="#2e3232" opacity="0.35"/><rect x="480" y="263.8" width="11" height="1.6" fill="#2e3232" opacity="0.27"/><rect x="239" y="263.0" width="29" height="1.6" fill="#b4b4ae" opacity="0.37"/><rect x="-1" y="264.2" width="23" height="1.6" fill="#b4b4ae" opacity="0.27"/><rect x="-20" y="264.7" width="15" height="1.6" fill="#b4b4ae" opacity="0.36"/><rect x="544" y="264.0" width="12" height="1.6" fill="#2e3232" opacity="0.25"/><rect x="376" y="264.5" width="29" height="1.6" fill="#b4b4ae" opacity="0.31"/><rect x="245" y="263.5" width="19" height="1.6" fill="#2e3232" opacity="0.43"/><rect x="514" y="263.5" width="21" height="1.6" fill="#2e3232" opacity="0.24"/><rect x="349" y="264.0" width="23" height="1.6" fill="#2e3232" opacity="0.22"/><rect x="318" y="263.0" width="15" height="1.6" fill="#2e3232" opacity="0.38"/><rect x="155" y="264.8" width="17" height="1.6" fill="#b4b4ae" opacity="0.31"/><rect x="256" y="264.4" width="12" height="1.6" fill="#2e3232" opacity="0.49"/><rect x="158" y="263.8" width="7" height="1.6" fill="#2e3232" opacity="0.40"/><rect x="129" y="263.1" width="22" height="1.6" fill="#b4b4ae" opacity="0.21"/><rect x="176" y="267.6" width="16" height="1.6" fill="#b4b4ae" opacity="0.20"/><rect x="409" y="266.6" width="18" height="1.6" fill="#2e3232" opacity="0.49"/><rect x="456" y="266.6" width="12" height="1.6" fill="#2e3232" opacity="0.43"/><rect x="532" y="266.8" width="18" height="1.6" fill="#2e3232" opacity="0.27"/><rect x="366" y="266.4" width="29" height="1.6" fill="#2e3232" opacity="0.32"/><rect x="545" y="266.8" width="9" height="1.6" fill="#2e3232" opacity="0.22"/><rect x="501" y="267.9" width="27" height="1.6" fill="#b4b4ae" opacity="0.40"/><rect x="171" y="266.1" width="10" height="1.6" fill="#b4b4ae" opacity="0.34"/><rect x="365" y="266.3" width="15" height="1.6" fill="#2e3232" opacity="0.30"/><rect x="-18" y="266.2" width="13" height="1.6" fill="#2e3232" opacity="0.49"/><rect x="539" y="267.6" width="11" height="1.6" fill="#2e3232" opacity="0.45"/><rect x="231" y="267.8" width="7" height="1.6" fill="#2e3232" opacity="0.31"/><rect x="92" y="266.8" width="15" height="1.6" fill="#b4b4ae" opacity="0.16"/><rect x="451" y="266.1" width="24" height="1.6" fill="#2e3232" opacity="0.21"/><rect x="514" y="269.7" width="12" height="1.6" fill="#b4b4ae" opacity="0.37"/><rect x="138" y="270.4" width="29" height="1.6" fill="#b4b4ae" opacity="0.22"/><rect x="164" y="270.8" width="13" height="1.6" fill="#2e3232" opacity="0.43"/><rect x="348" y="270.0" width="29" height="1.6" fill="#2e3232" opacity="0.27"/><rect x="535" y="269.9" width="29" height="1.6" fill="#2e3232" opacity="0.28"/><rect x="266" y="270.5" width="28" height="1.6" fill="#2e3232" opacity="0.44"/><rect x="457" y="269.6" width="25" height="1.6" fill="#b4b4ae" opacity="0.23"/><rect x="190" y="270.5" width="25" height="1.6" fill="#2e3232" opacity="0.26"/><rect x="123" y="269.7" width="8" height="1.6" fill="#2e3232" opacity="0.37"/><rect x="549" y="269.2" width="27" height="1.6" fill="#b4b4ae" opacity="0.22"/><rect x="36" y="269.5" width="18" height="1.6" fill="#b4b4ae" opacity="0.26"/><rect x="222" y="270.7" width="21" height="1.6" fill="#b4b4ae" opacity="0.34"/><rect x="365" y="270.1" width="9" height="1.6" fill="#b4b4ae" opacity="0.22"/><rect x="196" y="269.5" width="24" height="1.6" fill="#2e3232" opacity="0.27"/><rect x="69" y="272.8" width="27" height="1.6" fill="#b4b4ae" opacity="0.23"/><rect x="556" y="273.3" width="18" height="1.6" fill="#2e3232" opacity="0.44"/><rect x="555" y="273.7" width="8" height="1.6" fill="#2e3232" opacity="0.45"/><rect x="510" y="272.4" width="7" height="1.6" fill="#2e3232" opacity="0.24"/><rect x="544" y="273.7" width="20" height="1.6" fill="#b4b4ae" opacity="0.24"/><rect x="240" y="272.2" width="12" height="1.6" fill="#b4b4ae" opacity="0.39"/><rect x="326" y="272.3" width="21" height="1.6" fill="#2e3232" opacity="0.31"/><rect x="98" y="272.4" width="12" height="1.6" fill="#b4b4ae" opacity="0.31"/><rect x="-13" y="272.6" width="14" height="1.6" fill="#b4b4ae" opacity="0.20"/><rect x="98" y="272.2" width="25" height="1.6" fill="#2e3232" opacity="0.22"/><rect x="209" y="272.3" width="19" height="1.6" fill="#b4b4ae" opacity="0.17"/><rect x="383" y="273.9" width="16" height="1.6" fill="#2e3232" opacity="0.29"/><rect x="161" y="273.7" width="20" height="1.6" fill="#2e3232" opacity="0.32"/><rect x="558" y="272.4" width="15" height="1.6" fill="#2e3232" opacity="0.42"/><rect x="-17" y="275.8" width="28" height="1.6" fill="#2e3232" opacity="0.45"/><rect x="492" y="276.1" width="17" height="1.6" fill="#2e3232" opacity="0.20"/><rect x="352" y="275.7" width="28" height="1.6" fill="#2e3232" opacity="0.39"/><rect x="273" y="276.9" width="10" height="1.6" fill="#2e3232" opacity="0.36"/><rect x="43" y="275.4" width="18" height="1.6" fill="#b4b4ae" opacity="0.39"/><rect x="53" y="275.1" width="29" height="1.6" fill="#b4b4ae" opacity="0.27"/><rect x="517" y="276.6" width="15" height="1.6" fill="#b4b4ae" opacity="0.31"/><rect x="73" y="276.7" width="25" height="1.6" fill="#2e3232" opacity="0.32"/><rect x="461" y="276.0" width="10" height="1.6" fill="#2e3232" opacity="0.32"/><rect x="202" y="276.8" width="9" height="1.6" fill="#2e3232" opacity="0.42"/><rect x="4" y="276.7" width="19" height="1.6" fill="#b4b4ae" opacity="0.16"/><rect x="48" y="275.6" width="20" height="1.6" fill="#b4b4ae" opacity="0.31"/><rect x="224" y="275.9" width="20" height="1.6" fill="#2e3232" opacity="0.40"/><rect x="234" y="275.5" width="7" height="1.6" fill="#b4b4ae" opacity="0.27"/><rect x="423" y="278.9" width="25" height="1.6" fill="#2e3232" opacity="0.25"/><rect x="42" y="278.9" width="9" height="1.6" fill="#2e3232" opacity="0.23"/><rect x="276" y="279.5" width="7" height="1.6" fill="#b4b4ae" opacity="0.17"/><rect x="431" y="278.8" width="18" height="1.6" fill="#2e3232" opacity="0.35"/><rect x="532" y="279.5" width="9" height="1.6" fill="#b4b4ae" opacity="0.40"/><rect x="453" y="279.9" width="11" height="1.6" fill="#b4b4ae" opacity="0.27"/><rect x="511" y="278.1" width="10" height="1.6" fill="#b4b4ae" opacity="0.38"/><rect x="184" y="278.5" width="24" height="1.6" fill="#2e3232" opacity="0.47"/><rect x="453" y="278.4" width="9" height="1.6" fill="#2e3232" opacity="0.48"/><rect x="132" y="278.4" width="18" height="1.6" fill="#2e3232" opacity="0.21"/><rect x="74" y="278.3" width="28" height="1.6" fill="#b4b4ae" opacity="0.37"/><rect x="435" y="278.7" width="9" height="1.6" fill="#2e3232" opacity="0.39"/><rect x="486" y="278.2" width="19" height="1.6" fill="#b4b4ae" opacity="0.37"/><rect x="556" y="278.5" width="21" height="1.6" fill="#2e3232" opacity="0.44"/><rect x="554" y="281.9" width="20" height="1.6" fill="#2e3232" opacity="0.43"/><rect x="83" y="281.5" width="24" height="1.6" fill="#2e3232" opacity="0.45"/><rect x="351" y="281.6" width="30" height="1.6" fill="#b4b4ae" opacity="0.32"/><rect x="-19" y="281.9" width="7" height="1.6" fill="#2e3232" opacity="0.38"/><rect x="277" y="282.3" width="27" height="1.6" fill="#2e3232" opacity="0.27"/><rect x="-7" y="281.7" width="6" height="1.6" fill="#2e3232" opacity="0.23"/><rect x="110" y="282.2" width="20" height="1.6" fill="#b4b4ae" opacity="0.20"/><rect x="255" y="281.3" width="9" height="1.6" fill="#b4b4ae" opacity="0.21"/><rect x="36" y="281.8" width="21" height="1.6" fill="#b4b4ae" opacity="0.35"/><rect x="133" y="281.7" width="6" height="1.6" fill="#b4b4ae" opacity="0.29"/><rect x="354" y="281.5" width="17" height="1.6" fill="#b4b4ae" opacity="0.33"/><rect x="504" y="281.5" width="7" height="1.6" fill="#2e3232" opacity="0.32"/><rect x="14" y="282.9" width="25" height="1.6" fill="#2e3232" opacity="0.37"/><rect x="63" y="282.3" width="11" height="1.6" fill="#b4b4ae" opacity="0.28"/><rect x="452" y="284.1" width="10" height="1.6" fill="#2e3232" opacity="0.29"/><rect x="496" y="285.7" width="25" height="1.6" fill="#b4b4ae" opacity="0.15"/><rect x="412" y="284.5" width="17" height="1.6" fill="#b4b4ae" opacity="0.26"/><rect x="41" y="285.5" width="12" height="1.6" fill="#2e3232" opacity="0.30"/><rect x="383" y="285.1" width="26" height="1.6" fill="#b4b4ae" opacity="0.22"/><rect x="233" y="285.3" width="25" height="1.6" fill="#2e3232" opacity="0.28"/><rect x="540" y="284.5" width="11" height="1.6" fill="#b4b4ae" opacity="0.15"/><rect x="117" y="284.7" width="24" height="1.6" fill="#b4b4ae" opacity="0.34"/><rect x="490" y="285.3" width="14" height="1.6" fill="#2e3232" opacity="0.47"/><rect x="382" y="285.7" width="22" height="1.6" fill="#b4b4ae" opacity="0.27"/><rect x="385" y="285.1" width="27" height="1.6" fill="#2e3232" opacity="0.42"/><rect x="158" y="285.8" width="11" height="1.6" fill="#b4b4ae" opacity="0.17"/><rect x="64" y="284.7" width="7" height="1.6" fill="#2e3232" opacity="0.48"/><rect x="62" y="285.3" width="7" height="1.6" fill="#2e3232" opacity="0.41"/><rect x="384" y="287.7" width="24" height="1.6" fill="#2e3232" opacity="0.38"/><rect x="454" y="288.7" width="26" height="1.6" fill="#b4b4ae" opacity="0.17"/><rect x="510" y="287.2" width="29" height="1.6" fill="#2e3232" opacity="0.26"/><rect x="-0" y="288.7" width="26" height="1.6" fill="#b4b4ae" opacity="0.31"/><rect x="346" y="288.5" width="13" height="1.6" fill="#2e3232" opacity="0.23"/><rect x="99" y="287.5" width="14" height="1.6" fill="#2e3232" opacity="0.21"/><rect x="144" y="288.9" width="23" height="1.6" fill="#2e3232" opacity="0.30"/><rect x="272" y="287.8" width="26" height="1.6" fill="#b4b4ae" opacity="0.16"/><rect x="233" y="288.1" width="25" height="1.6" fill="#2e3232" opacity="0.41"/><rect x="106" y="287.3" width="27" height="1.6" fill="#2e3232" opacity="0.45"/><rect x="-19" y="287.0" width="11" height="1.6" fill="#b4b4ae" opacity="0.39"/><rect x="265" y="288.0" width="18" height="1.6" fill="#b4b4ae" opacity="0.20"/><rect x="181" y="287.6" width="26" height="1.6" fill="#2e3232" opacity="0.48"/><rect x="105" y="288.3" width="23" height="1.6" fill="#2e3232" opacity="0.23"/><rect x="27" y="291.3" width="25" height="1.6" fill="#b4b4ae" opacity="0.35"/><rect x="186" y="290.2" width="16" height="1.6" fill="#2e3232" opacity="0.47"/><rect x="495" y="291.8" width="7" height="1.6" fill="#2e3232" opacity="0.28"/><rect x="271" y="290.9" width="15" height="1.6" fill="#b4b4ae" opacity="0.21"/><rect x="288" y="290.7" width="24" height="1.6" fill="#b4b4ae" opacity="0.31"/><rect x="169" y="291.5" width="10" height="1.6" fill="#b4b4ae" opacity="0.32"/><rect x="78" y="290.3" width="17" height="1.6" fill="#b4b4ae" opacity="0.29"/><rect x="248" y="290.6" width="27" height="1.6" fill="#2e3232" opacity="0.26"/><rect x="388" y="290.5" width="26" height="1.6" fill="#2e3232" opacity="0.25"/><rect x="169" y="290.4" width="19" height="1.6" fill="#2e3232" opacity="0.30"/><rect x="546" y="290.2" width="23" height="1.6" fill="#2e3232" opacity="0.49"/><rect x="203" y="290.9" width="30" height="1.6" fill="#b4b4ae" opacity="0.33"/><rect x="94" y="290.8" width="21" height="1.6" fill="#2e3232" opacity="0.26"/><rect x="-0" y="291.0" width="16" height="1.6" fill="#b4b4ae" opacity="0.32"/><rect x="347" y="293.8" width="17" height="1.6" fill="#2e3232" opacity="0.38"/><rect x="410" y="294.5" width="28" height="1.6" fill="#2e3232" opacity="0.37"/><rect x="224" y="294.5" width="11" height="1.6" fill="#b4b4ae" opacity="0.37"/><rect x="386" y="293.9" width="26" height="1.6" fill="#b4b4ae" opacity="0.31"/><rect x="162" y="294.6" width="21" height="1.6" fill="#2e3232" opacity="0.33"/><rect x="394" y="293.9" width="21" height="1.6" fill="#2e3232" opacity="0.33"/><rect x="341" y="293.4" width="16" height="1.6" fill="#b4b4ae" opacity="0.38"/><rect x="360" y="294.9" width="25" height="1.6" fill="#2e3232" opacity="0.35"/><rect x="2" y="294.9" width="19" height="1.6" fill="#2e3232" opacity="0.43"/><rect x="281" y="294.4" width="8" height="1.6" fill="#b4b4ae" opacity="0.29"/><rect x="277" y="293.8" width="21" height="1.6" fill="#b4b4ae" opacity="0.28"/><rect x="530" y="294.5" width="11" height="1.6" fill="#b4b4ae" opacity="0.25"/><rect x="51" y="293.5" width="30" height="1.6" fill="#2e3232" opacity="0.22"/><rect x="212" y="294.4" width="6" height="1.6" fill="#2e3232" opacity="0.33"/><rect x="184" y="297.9" width="12" height="1.6" fill="#2e3232" opacity="0.42"/><rect x="286" y="296.4" width="11" height="1.6" fill="#b4b4ae" opacity="0.25"/><rect x="55" y="296.9" width="25" height="1.6" fill="#b4b4ae" opacity="0.31"/><rect x="306" y="297.3" width="11" height="1.6" fill="#b4b4ae" opacity="0.24"/><rect x="455" y="297.1" width="26" height="1.6" fill="#2e3232" opacity="0.29"/><rect x="53" y="296.5" width="26" height="1.6" fill="#2e3232" opacity="0.46"/><rect x="198" y="296.0" width="12" height="1.6" fill="#2e3232" opacity="0.26"/><rect x="399" y="297.0" width="13" height="1.6" fill="#2e3232" opacity="0.29"/><rect x="229" y="297.9" width="21" height="1.6" fill="#b4b4ae" opacity="0.24"/><rect x="476" y="297.6" width="7" height="1.6" fill="#b4b4ae" opacity="0.38"/><rect x="61" y="296.0" width="26" height="1.6" fill="#b4b4ae" opacity="0.15"/><rect x="532" y="296.3" width="22" height="1.6" fill="#2e3232" opacity="0.23"/><rect x="116" y="297.8" width="25" height="1.6" fill="#2e3232" opacity="0.25"/><rect x="439" y="297.6" width="10" height="1.6" fill="#b4b4ae" opacity="0.30"/><rect x="368" y="299.4" width="27" height="1.6" fill="#b4b4ae" opacity="0.36"/><rect x="382" y="300.8" width="19" height="1.6" fill="#b4b4ae" opacity="0.26"/><rect x="302" y="300.0" width="12" height="1.6" fill="#2e3232" opacity="0.24"/><rect x="14" y="300.0" width="17" height="1.6" fill="#2e3232" opacity="0.35"/><rect x="293" y="299.9" width="27" height="1.6" fill="#2e3232" opacity="0.45"/><rect x="306" y="299.8" width="22" height="1.6" fill="#b4b4ae" opacity="0.24"/><rect x="537" y="299.1" width="8" height="1.6" fill="#b4b4ae" opacity="0.31"/><rect x="334" y="301.0" width="22" height="1.6" fill="#b4b4ae" opacity="0.23"/><rect x="276" y="300.4" width="18" height="1.6" fill="#b4b4ae" opacity="0.16"/><rect x="343" y="299.9" width="14" height="1.6" fill="#b4b4ae" opacity="0.24"/><rect x="285" y="299.8" width="24" height="1.6" fill="#2e3232" opacity="0.33"/><rect x="301" y="299.8" width="26" height="1.6" fill="#2e3232" opacity="0.45"/><rect x="272" y="300.3" width="13" height="1.6" fill="#2e3232" opacity="0.49"/><rect x="439" y="300.2" width="14" height="1.6" fill="#2e3232" opacity="0.29"/><rect x="348" y="303.8" width="25" height="1.6" fill="#2e3232" opacity="0.42"/><rect x="296" y="302.4" width="7" height="1.6" fill="#2e3232" opacity="0.20"/><rect x="514" y="303.8" width="21" height="1.6" fill="#b4b4ae" opacity="0.35"/><rect x="335" y="303.2" width="21" height="1.6" fill="#b4b4ae" opacity="0.32"/><rect x="375" y="303.5" width="11" height="1.6" fill="#b4b4ae" opacity="0.26"/><rect x="39" y="303.8" width="10" height="1.6" fill="#2e3232" opacity="0.43"/><rect x="360" y="303.1" width="15" height="1.6" fill="#b4b4ae" opacity="0.35"/><rect x="130" y="302.9" width="13" height="1.6" fill="#2e3232" opacity="0.30"/><rect x="352" y="302.1" width="28" height="1.6" fill="#2e3232" opacity="0.37"/><rect x="49" y="302.9" width="25" height="1.6" fill="#b4b4ae" opacity="0.38"/><rect x="-12" y="304.0" width="15" height="1.6" fill="#b4b4ae" opacity="0.38"/><rect x="256" y="302.4" width="16" height="1.6" fill="#2e3232" opacity="0.39"/><rect x="68" y="302.2" width="6" height="1.6" fill="#2e3232" opacity="0.41"/><rect x="540" y="302.0" width="8" height="1.6" fill="#b4b4ae" opacity="0.18"/><rect x="397" y="305.1" width="12" height="1.6" fill="#b4b4ae" opacity="0.20"/><rect x="429" y="305.2" width="23" height="1.6" fill="#b4b4ae" opacity="0.33"/><rect x="345" y="305.5" width="23" height="1.6" fill="#2e3232" opacity="0.48"/><rect x="539" y="306.3" width="23" height="1.6" fill="#2e3232" opacity="0.20"/><rect x="454" y="305.3" width="8" height="1.6" fill="#2e3232" opacity="0.42"/><rect x="479" y="306.1" width="18" height="1.6" fill="#2e3232" opacity="0.31"/><rect x="234" y="305.7" width="22" height="1.6" fill="#2e3232" opacity="0.44"/><rect x="354" y="306.6" width="21" height="1.6" fill="#2e3232" opacity="0.32"/><rect x="528" y="305.1" width="25" height="1.6" fill="#b4b4ae" opacity="0.22"/><rect x="545" y="306.2" width="23" height="1.6" fill="#b4b4ae" opacity="0.23"/><rect x="547" y="305.9" width="26" height="1.6" fill="#b4b4ae" opacity="0.23"/><rect x="495" y="306.8" width="15" height="1.6" fill="#b4b4ae" opacity="0.30"/><rect x="448" y="305.8" width="13" height="1.6" fill="#2e3232" opacity="0.28"/><rect x="320" y="306.7" width="26" height="1.6" fill="#b4b4ae" opacity="0.16"/><rect x="451" y="309.7" width="27" height="1.6" fill="#b4b4ae" opacity="0.22"/><rect x="448" y="308.2" width="22" height="1.6" fill="#b4b4ae" opacity="0.24"/><rect x="301" y="309.9" width="25" height="1.6" fill="#2e3232" opacity="0.43"/><rect x="116" y="308.4" width="21" height="1.6" fill="#b4b4ae" opacity="0.27"/><rect x="128" y="308.2" width="24" height="1.6" fill="#b4b4ae" opacity="0.26"/><rect x="448" y="309.8" width="25" height="1.6" fill="#2e3232" opacity="0.37"/><rect x="493" y="308.4" width="19" height="1.6" fill="#2e3232" opacity="0.38"/><rect x="92" y="309.1" width="10" height="1.6" fill="#b4b4ae" opacity="0.24"/><rect x="213" y="310.0" width="18" height="1.6" fill="#2e3232" opacity="0.21"/><rect x="197" y="308.3" width="9" height="1.6" fill="#b4b4ae" opacity="0.35"/><rect x="326" y="308.1" width="14" height="1.6" fill="#2e3232" opacity="0.21"/><rect x="554" y="308.5" width="27" height="1.6" fill="#2e3232" opacity="0.37"/><rect x="432" y="309.6" width="16" height="1.6" fill="#b4b4ae" opacity="0.34"/><rect x="539" y="308.4" width="12" height="1.6" fill="#2e3232" opacity="0.26"/><rect x="29" y="311.9" width="7" height="1.6" fill="#b4b4ae" opacity="0.37"/><rect x="529" y="311.8" width="28" height="1.6" fill="#2e3232" opacity="0.38"/><rect x="50" y="312.3" width="29" height="1.6" fill="#2e3232" opacity="0.37"/><rect x="535" y="311.3" width="22" height="1.6" fill="#2e3232" opacity="0.33"/><rect x="540" y="311.5" width="30" height="1.6" fill="#2e3232" opacity="0.21"/><rect x="184" y="311.1" width="28" height="1.6" fill="#b4b4ae" opacity="0.36"/><rect x="436" y="311.1" width="23" height="1.6" fill="#b4b4ae" opacity="0.40"/><rect x="64" y="311.6" width="24" height="1.6" fill="#b4b4ae" opacity="0.32"/><rect x="323" y="311.5" width="24" height="1.6" fill="#2e3232" opacity="0.30"/><rect x="52" y="311.3" width="18" height="1.6" fill="#2e3232" opacity="0.27"/><rect x="373" y="311.1" width="6" height="1.6" fill="#b4b4ae" opacity="0.20"/><rect x="518" y="312.8" width="11" height="1.6" fill="#b4b4ae" opacity="0.37"/><rect x="61" y="312.7" width="17" height="1.6" fill="#2e3232" opacity="0.48"/><rect x="344" y="312.0" width="17" height="1.6" fill="#2e3232" opacity="0.45"/><rect x="344" y="315.4" width="9" height="1.6" fill="#2e3232" opacity="0.22"/><rect x="301" y="314.8" width="9" height="1.6" fill="#b4b4ae" opacity="0.22"/><rect x="70" y="314.3" width="13" height="1.6" fill="#b4b4ae" opacity="0.23"/><rect x="265" y="316.0" width="14" height="1.6" fill="#b4b4ae" opacity="0.18"/><rect x="13" y="315.0" width="27" height="1.6" fill="#b4b4ae" opacity="0.20"/><rect x="146" y="316.0" width="12" height="1.6" fill="#2e3232" opacity="0.31"/><rect x="559" y="315.8" width="28" height="1.6" fill="#2e3232" opacity="0.29"/><rect x="13" y="314.0" width="23" height="1.6" fill="#2e3232" opacity="0.49"/><rect x="448" y="315.7" width="14" height="1.6" fill="#2e3232" opacity="0.20"/><rect x="285" y="314.4" width="10" height="1.6" fill="#2e3232" opacity="0.47"/><rect x="311" y="315.4" width="9" height="1.6" fill="#2e3232" opacity="0.43"/><rect x="94" y="315.0" width="8" height="1.6" fill="#2e3232" opacity="0.38"/><rect x="139" y="315.6" width="11" height="1.6" fill="#b4b4ae" opacity="0.33"/><rect x="318" y="314.8" width="11" height="1.6" fill="#2e3232" opacity="0.42"/><rect x="399" y="318.7" width="7" height="1.6" fill="#b4b4ae" opacity="0.23"/><rect x="481" y="318.0" width="18" height="1.6" fill="#2e3232" opacity="0.47"/><rect x="486" y="317.7" width="12" height="1.6" fill="#2e3232" opacity="0.45"/><rect x="75" y="318.0" width="15" height="1.6" fill="#b4b4ae" opacity="0.15"/><rect x="239" y="318.6" width="18" height="1.6" fill="#2e3232" opacity="0.41"/><rect x="482" y="318.5" width="14" height="1.6" fill="#b4b4ae" opacity="0.25"/><rect x="16" y="318.0" width="27" height="1.6" fill="#b4b4ae" opacity="0.27"/><rect x="288" y="317.4" width="19" height="1.6" fill="#2e3232" opacity="0.49"/><rect x="86" y="317.1" width="8" height="1.6" fill="#2e3232" opacity="0.45"/><rect x="36" y="318.2" width="23" height="1.6" fill="#2e3232" opacity="0.21"/><rect x="314" y="318.7" width="19" height="1.6" fill="#b4b4ae" opacity="0.18"/><rect x="396" y="318.0" width="7" height="1.6" fill="#2e3232" opacity="0.35"/><rect x="142" y="318.2" width="9" height="1.6" fill="#2e3232" opacity="0.24"/><rect x="479" y="317.3" width="10" height="1.6" fill="#b4b4ae" opacity="0.34"/><rect x="459" y="321.7" width="29" height="1.6" fill="#2e3232" opacity="0.33"/><rect x="285" y="320.7" width="15" height="1.6" fill="#b4b4ae" opacity="0.34"/><rect x="119" y="321.6" width="14" height="1.6" fill="#2e3232" opacity="0.49"/><rect x="509" y="321.0" width="26" height="1.6" fill="#b4b4ae" opacity="0.16"/><rect x="536" y="321.3" width="28" height="1.6" fill="#2e3232" opacity="0.33"/><rect x="191" y="321.0" width="19" height="1.6" fill="#2e3232" opacity="0.33"/><rect x="-8" y="321.9" width="9" height="1.6" fill="#b4b4ae" opacity="0.34"/><rect x="347" y="320.1" width="25" height="1.6" fill="#b4b4ae" opacity="0.37"/><rect x="352" y="321.1" width="12" height="1.6" fill="#b4b4ae" opacity="0.22"/><rect x="516" y="320.9" width="21" height="1.6" fill="#2e3232" opacity="0.36"/><rect x="532" y="320.2" width="13" height="1.6" fill="#2e3232" opacity="0.39"/><rect x="325" y="320.9" width="29" height="1.6" fill="#2e3232" opacity="0.28"/><rect x="290" y="320.6" width="10" height="1.6" fill="#2e3232" opacity="0.24"/><rect x="216" y="321.1" width="13" height="1.6" fill="#2e3232" opacity="0.23"/><rect x="467" y="323.4" width="21" height="1.6" fill="#b4b4ae" opacity="0.31"/><rect x="392" y="323.9" width="17" height="1.6" fill="#2e3232" opacity="0.38"/><rect x="160" y="323.8" width="12" height="1.6" fill="#2e3232" opacity="0.35"/><rect x="320" y="323.5" width="6" height="1.6" fill="#2e3232" opacity="0.46"/><rect x="303" y="323.6" width="18" height="1.6" fill="#2e3232" opacity="0.50"/><rect x="428" y="323.9" width="10" height="1.6" fill="#2e3232" opacity="0.46"/><rect x="16" y="323.2" width="15" height="1.6" fill="#2e3232" opacity="0.42"/><rect x="111" y="323.7" width="29" height="1.6" fill="#b4b4ae" opacity="0.19"/><rect x="184" y="324.6" width="22" height="1.6" fill="#b4b4ae" opacity="0.36"/><rect x="280" y="324.0" width="24" height="1.6" fill="#b4b4ae" opacity="0.34"/><rect x="435" y="324.7" width="23" height="1.6" fill="#b4b4ae" opacity="0.18"/><rect x="-17" y="324.9" width="24" height="1.6" fill="#b4b4ae" opacity="0.27"/><rect x="312" y="324.2" width="16" height="1.6" fill="#b4b4ae" opacity="0.37"/><rect x="200" y="323.6" width="17" height="1.6" fill="#2e3232" opacity="0.42"/><rect x="207" y="327.6" width="19" height="1.6" fill="#2e3232" opacity="0.30"/><rect x="473" y="326.6" width="18" height="1.6" fill="#2e3232" opacity="0.26"/><rect x="64" y="327.8" width="20" height="1.6" fill="#b4b4ae" opacity="0.17"/><rect x="168" y="326.4" width="26" height="1.6" fill="#b4b4ae" opacity="0.39"/><rect x="227" y="327.1" width="28" height="1.6" fill="#2e3232" opacity="0.21"/><rect x="268" y="328.0" width="28" height="1.6" fill="#b4b4ae" opacity="0.28"/><rect x="280" y="326.7" width="18" height="1.6" fill="#b4b4ae" opacity="0.25"/><rect x="325" y="327.1" width="14" height="1.6" fill="#b4b4ae" opacity="0.32"/><rect x="37" y="327.1" width="15" height="1.6" fill="#2e3232" opacity="0.37"/><rect x="490" y="327.2" width="29" height="1.6" fill="#2e3232" opacity="0.33"/><rect x="558" y="326.3" width="14" height="1.6" fill="#2e3232" opacity="0.44"/><rect x="164" y="326.2" width="29" height="1.6" fill="#b4b4ae" opacity="0.28"/><rect x="499" y="327.8" width="23" height="1.6" fill="#b4b4ae" opacity="0.40"/><rect x="224" y="327.0" width="10" height="1.6" fill="#2e3232" opacity="0.35"/><rect x="89" y="329.7" width="10" height="1.6" fill="#b4b4ae" opacity="0.30"/><rect x="556" y="330.6" width="21" height="1.6" fill="#2e3232" opacity="0.32"/><rect x="158" y="330.7" width="23" height="1.6" fill="#2e3232" opacity="0.29"/><rect x="320" y="330.1" width="22" height="1.6" fill="#2e3232" opacity="0.35"/><rect x="134" y="330.1" width="22" height="1.6" fill="#2e3232" opacity="0.50"/><rect x="218" y="329.2" width="9" height="1.6" fill="#2e3232" opacity="0.43"/><rect x="38" y="330.2" width="10" height="1.6" fill="#2e3232" opacity="0.45"/><rect x="448" y="329.6" width="7" height="1.6" fill="#2e3232" opacity="0.43"/><rect x="395" y="329.2" width="14" height="1.6" fill="#2e3232" opacity="0.28"/><rect x="504" y="329.8" width="20" height="1.6" fill="#2e3232" opacity="0.33"/><rect x="12" y="329.9" width="27" height="1.6" fill="#b4b4ae" opacity="0.39"/><rect x="340" y="330.7" width="12" height="1.6" fill="#2e3232" opacity="0.48"/><rect x="163" y="330.2" width="28" height="1.6" fill="#b4b4ae" opacity="0.23"/><rect x="537" y="329.8" width="18" height="1.6" fill="#b4b4ae" opacity="0.21"/><rect x="397" y="333.0" width="11" height="1.6" fill="#2e3232" opacity="0.46"/><rect x="440" y="332.4" width="12" height="1.6" fill="#2e3232" opacity="0.31"/><rect x="543" y="333.1" width="13" height="1.6" fill="#b4b4ae" opacity="0.18"/><rect x="204" y="333.7" width="16" height="1.6" fill="#2e3232" opacity="0.24"/><rect x="184" y="332.5" width="12" height="1.6" fill="#2e3232" opacity="0.29"/><rect x="0" y="333.4" width="22" height="1.6" fill="#2e3232" opacity="0.25"/><rect x="34" y="332.9" width="12" height="1.6" fill="#b4b4ae" opacity="0.18"/><rect x="465" y="333.4" width="25" height="1.6" fill="#2e3232" opacity="0.31"/><rect x="199" y="333.0" width="29" height="1.6" fill="#2e3232" opacity="0.49"/><rect x="112" y="332.5" width="17" height="1.6" fill="#2e3232" opacity="0.41"/><rect x="502" y="333.2" width="20" height="1.6" fill="#2e3232" opacity="0.27"/><rect x="103" y="333.1" width="27" height="1.6" fill="#2e3232" opacity="0.35"/><rect x="137" y="333.1" width="25" height="1.6" fill="#2e3232" opacity="0.40"/><rect x="160" y="333.7" width="15" height="1.6" fill="#2e3232" opacity="0.25"/><rect x="166" y="335.7" width="22" height="1.6" fill="#2e3232" opacity="0.37"/><rect x="270" y="335.5" width="13" height="1.6" fill="#2e3232" opacity="0.29"/><rect x="53" y="336.8" width="23" height="1.6" fill="#2e3232" opacity="0.32"/><rect x="429" y="335.6" width="27" height="1.6" fill="#b4b4ae" opacity="0.18"/><rect x="-3" y="335.8" width="22" height="1.6" fill="#b4b4ae" opacity="0.24"/><rect x="362" y="335.7" width="23" height="1.6" fill="#2e3232" opacity="0.45"/><rect x="345" y="336.5" width="10" height="1.6" fill="#2e3232" opacity="0.47"/><rect x="393" y="335.4" width="7" height="1.6" fill="#2e3232" opacity="0.25"/><rect x="156" y="336.3" width="15" height="1.6" fill="#2e3232" opacity="0.29"/><rect x="84" y="335.5" width="26" height="1.6" fill="#b4b4ae" opacity="0.33"/><rect x="232" y="336.7" width="22" height="1.6" fill="#2e3232" opacity="0.20"/><rect x="430" y="336.2" width="13" height="1.6" fill="#2e3232" opacity="0.46"/><rect x="7" y="335.4" width="12" height="1.6" fill="#2e3232" opacity="0.44"/><rect x="510" y="335.8" width="24" height="1.6" fill="#2e3232" opacity="0.41"/><rect x="414" y="339.9" width="26" height="1.6" fill="#2e3232" opacity="0.23"/><rect x="226" y="339.7" width="28" height="1.6" fill="#b4b4ae" opacity="0.33"/><rect x="344" y="338.9" width="17" height="1.6" fill="#2e3232" opacity="0.41"/><rect x="277" y="338.1" width="28" height="1.6" fill="#2e3232" opacity="0.43"/><rect x="388" y="339.9" width="25" height="1.6" fill="#2e3232" opacity="0.36"/><rect x="350" y="338.7" width="19" height="1.6" fill="#2e3232" opacity="0.22"/><rect x="219" y="339.4" width="11" height="1.6" fill="#2e3232" opacity="0.24"/><rect x="369" y="338.9" width="12" height="1.6" fill="#2e3232" opacity="0.35"/><rect x="523" y="338.3" width="14" height="1.6" fill="#2e3232" opacity="0.47"/><rect x="307" y="339.5" width="14" height="1.6" fill="#b4b4ae" opacity="0.29"/><rect x="78" y="339.5" width="22" height="1.6" fill="#b4b4ae" opacity="0.27"/><rect x="462" y="338.4" width="9" height="1.6" fill="#2e3232" opacity="0.31"/><rect x="15" y="338.9" width="13" height="1.6" fill="#2e3232" opacity="0.41"/><rect x="46" y="338.3" width="14" height="1.6" fill="#2e3232" opacity="0.31"/><rect x="22" y="341.2" width="6" height="1.6" fill="#b4b4ae" opacity="0.34"/><rect x="396" y="342.0" width="30" height="1.6" fill="#b4b4ae" opacity="0.18"/><rect x="232" y="342.8" width="11" height="1.6" fill="#2e3232" opacity="0.20"/><rect x="354" y="341.5" width="21" height="1.6" fill="#b4b4ae" opacity="0.31"/><rect x="123" y="342.7" width="9" height="1.6" fill="#2e3232" opacity="0.43"/><rect x="152" y="342.9" width="10" height="1.6" fill="#b4b4ae" opacity="0.36"/><rect x="78" y="341.7" width="25" height="1.6" fill="#b4b4ae" opacity="0.34"/><rect x="87" y="342.1" width="26" height="1.6" fill="#2e3232" opacity="0.31"/><rect x="194" y="342.1" width="26" height="1.6" fill="#2e3232" opacity="0.21"/><rect x="344" y="342.9" width="26" height="1.6" fill="#b4b4ae" opacity="0.38"/><rect x="267" y="342.2" width="18" height="1.6" fill="#2e3232" opacity="0.29"/><rect x="27" y="342.9" width="23" height="1.6" fill="#2e3232" opacity="0.33"/><rect x="32" y="342.4" width="7" height="1.6" fill="#2e3232" opacity="0.26"/><rect x="-18" y="341.9" width="26" height="1.6" fill="#b4b4ae" opacity="0.35"/><rect x="144" y="344.7" width="22" height="1.6" fill="#2e3232" opacity="0.33"/><rect x="234" y="344.3" width="22" height="1.6" fill="#b4b4ae" opacity="0.38"/><rect x="152" y="344.4" width="17" height="1.6" fill="#b4b4ae" opacity="0.24"/><rect x="29" y="345.8" width="14" height="1.6" fill="#2e3232" opacity="0.49"/><rect x="482" y="345.6" width="29" height="1.6" fill="#b4b4ae" opacity="0.30"/><rect x="15" y="345.1" width="22" height="1.6" fill="#b4b4ae" opacity="0.22"/><rect x="533" y="344.7" width="18" height="1.6" fill="#b4b4ae" opacity="0.22"/><rect x="493" y="344.9" width="7" height="1.6" fill="#2e3232" opacity="0.40"/><rect x="29" y="344.8" width="22" height="1.6" fill="#2e3232" opacity="0.37"/><rect x="287" y="344.4" width="20" height="1.6" fill="#2e3232" opacity="0.23"/><rect x="496" y="344.5" width="19" height="1.6" fill="#2e3232" opacity="0.46"/><rect x="35" y="345.1" width="19" height="1.6" fill="#2e3232" opacity="0.35"/><rect x="111" y="345.2" width="20" height="1.6" fill="#2e3232" opacity="0.35"/><rect x="27" y="345.7" width="16" height="1.6" fill="#2e3232" opacity="0.33"/><rect x="299" y="349.0" width="23" height="1.6" fill="#b4b4ae" opacity="0.18"/><rect x="399" y="347.3" width="8" height="1.6" fill="#b4b4ae" opacity="0.25"/><rect x="537" y="348.6" width="20" height="1.6" fill="#b4b4ae" opacity="0.18"/><rect x="13" y="348.2" width="12" height="1.6" fill="#2e3232" opacity="0.20"/><rect x="104" y="348.8" width="13" height="1.6" fill="#b4b4ae" opacity="0.26"/><rect x="340" y="348.7" width="27" height="1.6" fill="#b4b4ae" opacity="0.38"/><rect x="77" y="348.4" width="24" height="1.6" fill="#2e3232" opacity="0.43"/><rect x="459" y="348.9" width="9" height="1.6" fill="#2e3232" opacity="0.42"/><rect x="399" y="348.1" width="7" height="1.6" fill="#b4b4ae" opacity="0.17"/><rect x="446" y="347.5" width="9" height="1.6" fill="#b4b4ae" opacity="0.32"/><rect x="92" y="347.2" width="17" height="1.6" fill="#b4b4ae" opacity="0.30"/><rect x="-8" y="348.1" width="9" height="1.6" fill="#b4b4ae" opacity="0.20"/><rect x="148" y="348.8" width="22" height="1.6" fill="#2e3232" opacity="0.24"/><rect x="292" y="347.0" width="23" height="1.6" fill="#b4b4ae" opacity="0.39"/><rect x="179" y="351.6" width="10" height="1.6" fill="#2e3232" opacity="0.46"/><rect x="1" y="350.8" width="10" height="1.6" fill="#b4b4ae" opacity="0.32"/><rect x="256" y="351.7" width="10" height="1.6" fill="#b4b4ae" opacity="0.25"/><rect x="334" y="351.8" width="8" height="1.6" fill="#2e3232" opacity="0.26"/><rect x="322" y="350.9" width="7" height="1.6" fill="#2e3232" opacity="0.31"/><rect x="315" y="351.2" width="15" height="1.6" fill="#2e3232" opacity="0.20"/><rect x="174" y="350.1" width="6" height="1.6" fill="#2e3232" opacity="0.50"/><rect x="65" y="351.0" width="22" height="1.6" fill="#2e3232" opacity="0.28"/><rect x="132" y="352.0" width="20" height="1.6" fill="#2e3232" opacity="0.49"/><rect x="-0" y="351.5" width="19" height="1.6" fill="#b4b4ae" opacity="0.37"/><rect x="347" y="351.6" width="21" height="1.6" fill="#2e3232" opacity="0.28"/><rect x="486" y="351.5" width="29" height="1.6" fill="#b4b4ae" opacity="0.23"/><rect x="409" y="351.1" width="18" height="1.6" fill="#b4b4ae" opacity="0.24"/><rect x="215" y="352.0" width="7" height="1.6" fill="#2e3232" opacity="0.30"/><rect x="259" y="353.7" width="15" height="1.6" fill="#2e3232" opacity="0.27"/><rect x="59" y="353.9" width="6" height="1.6" fill="#b4b4ae" opacity="0.26"/><rect x="310" y="353.6" width="13" height="1.6" fill="#2e3232" opacity="0.22"/><rect x="159" y="353.7" width="23" height="1.6" fill="#b4b4ae" opacity="0.38"/><rect x="514" y="354.2" width="20" height="1.6" fill="#2e3232" opacity="0.25"/><rect x="553" y="354.7" width="15" height="1.6" fill="#b4b4ae" opacity="0.26"/><rect x="19" y="353.5" width="18" height="1.6" fill="#b4b4ae" opacity="0.22"/><rect x="-7" y="353.4" width="10" height="1.6" fill="#2e3232" opacity="0.41"/><rect x="212" y="354.3" width="11" height="1.6" fill="#b4b4ae" opacity="0.37"/><rect x="94" y="353.2" width="24" height="1.6" fill="#b4b4ae" opacity="0.30"/><rect x="449" y="353.4" width="27" height="1.6" fill="#2e3232" opacity="0.24"/><rect x="291" y="353.4" width="27" height="1.6" fill="#b4b4ae" opacity="0.38"/><rect x="170" y="354.4" width="24" height="1.6" fill="#b4b4ae" opacity="0.25"/><rect x="176" y="354.3" width="7" height="1.6" fill="#2e3232" opacity="0.21"/><rect x="174" y="356.9" width="18" height="1.6" fill="#b4b4ae" opacity="0.21"/><rect x="-12" y="356.1" width="28" height="1.6" fill="#b4b4ae" opacity="0.40"/><rect x="336" y="356.3" width="23" height="1.6" fill="#2e3232" opacity="0.23"/><rect x="63" y="356.8" width="24" height="1.6" fill="#2e3232" opacity="0.44"/><rect x="292" y="357.2" width="20" height="1.6" fill="#b4b4ae" opacity="0.31"/><rect x="172" y="357.5" width="24" height="1.6" fill="#2e3232" opacity="0.41"/><rect x="430" y="356.9" width="13" height="1.6" fill="#b4b4ae" opacity="0.39"/><rect x="141" y="356.0" width="19" height="1.6" fill="#b4b4ae" opacity="0.18"/><rect x="256" y="358.0" width="22" height="1.6" fill="#b4b4ae" opacity="0.24"/><rect x="112" y="356.3" width="24" height="1.6" fill="#2e3232" opacity="0.21"/><rect x="15" y="357.9" width="18" height="1.6" fill="#b4b4ae" opacity="0.20"/><rect x="192" y="357.8" width="10" height="1.6" fill="#2e3232" opacity="0.42"/><rect x="74" y="358.0" width="7" height="1.6" fill="#b4b4ae" opacity="0.21"/><rect x="269" y="356.9" width="21" height="1.6" fill="#2e3232" opacity="0.44"/><rect x="168" y="359.1" width="28" height="1.6" fill="#2e3232" opacity="0.42"/><rect x="354" y="360.1" width="16" height="1.6" fill="#b4b4ae" opacity="0.16"/><rect x="218" y="359.4" width="28" height="1.6" fill="#b4b4ae" opacity="0.31"/><rect x="126" y="359.4" width="12" height="1.6" fill="#2e3232" opacity="0.27"/><rect x="420" y="359.4" width="21" height="1.6" fill="#2e3232" opacity="0.50"/><rect x="310" y="359.5" width="10" height="1.6" fill="#b4b4ae" opacity="0.37"/><rect x="416" y="360.0" width="26" height="1.6" fill="#2e3232" opacity="0.30"/><rect x="497" y="359.9" width="10" height="1.6" fill="#b4b4ae" opacity="0.30"/><rect x="316" y="359.7" width="27" height="1.6" fill="#2e3232" opacity="0.47"/><rect x="432" y="361.0" width="27" height="1.6" fill="#2e3232" opacity="0.46"/><rect x="153" y="359.0" width="7" height="1.6" fill="#2e3232" opacity="0.49"/><rect x="509" y="359.3" width="10" height="1.6" fill="#b4b4ae" opacity="0.17"/><rect x="376" y="360.4" width="8" height="1.6" fill="#2e3232" opacity="0.48"/><rect x="492" y="360.6" width="30" height="1.6" fill="#2e3232" opacity="0.27"/><rect x="380" y="362.9" width="7" height="1.6" fill="#2e3232" opacity="0.27"/><rect x="41" y="363.8" width="6" height="1.6" fill="#b4b4ae" opacity="0.23"/><rect x="50" y="362.4" width="18" height="1.6" fill="#2e3232" opacity="0.33"/><rect x="378" y="362.2" width="10" height="1.6" fill="#b4b4ae" opacity="0.28"/><rect x="185" y="362.4" width="18" height="1.6" fill="#b4b4ae" opacity="0.24"/><rect x="541" y="362.4" width="27" height="1.6" fill="#b4b4ae" opacity="0.22"/><rect x="133" y="362.8" width="8" height="1.6" fill="#2e3232" opacity="0.35"/><rect x="303" y="363.3" width="15" height="1.6" fill="#2e3232" opacity="0.41"/><rect x="296" y="363.7" width="19" height="1.6" fill="#b4b4ae" opacity="0.40"/><rect x="396" y="363.9" width="16" height="1.6" fill="#2e3232" opacity="0.33"/><rect x="205" y="364.0" width="15" height="1.6" fill="#2e3232" opacity="0.24"/><rect x="-17" y="363.2" width="21" height="1.6" fill="#b4b4ae" opacity="0.21"/><rect x="199" y="363.7" width="12" height="1.6" fill="#2e3232" opacity="0.23"/><rect x="435" y="362.6" width="28" height="1.6" fill="#2e3232" opacity="0.41"/><rect x="355" y="365.0" width="19" height="1.6" fill="#2e3232" opacity="0.49"/><rect x="413" y="367.0" width="26" height="1.6" fill="#2e3232" opacity="0.38"/><rect x="116" y="366.4" width="21" height="1.6" fill="#b4b4ae" opacity="0.24"/><rect x="208" y="365.6" width="19" height="1.6" fill="#b4b4ae" opacity="0.32"/><rect x="345" y="365.5" width="19" height="1.6" fill="#2e3232" opacity="0.38"/><rect x="507" y="366.0" width="17" height="1.6" fill="#b4b4ae" opacity="0.28"/><rect x="108" y="366.0" width="9" height="1.6" fill="#b4b4ae" opacity="0.28"/><rect x="286" y="366.6" width="26" height="1.6" fill="#2e3232" opacity="0.25"/><rect x="247" y="366.7" width="21" height="1.6" fill="#b4b4ae" opacity="0.37"/><rect x="5" y="365.2" width="15" height="1.6" fill="#b4b4ae" opacity="0.35"/><rect x="69" y="366.6" width="12" height="1.6" fill="#2e3232" opacity="0.31"/><rect x="282" y="367.0" width="17" height="1.6" fill="#2e3232" opacity="0.32"/><rect x="383" y="366.5" width="17" height="1.6" fill="#2e3232" opacity="0.44"/><rect x="67" y="365.5" width="22" height="1.6" fill="#2e3232" opacity="0.36"/><rect x="195" y="368.4" width="14" height="1.6" fill="#2e3232" opacity="0.21"/><rect x="311" y="368.5" width="7" height="1.6" fill="#2e3232" opacity="0.42"/><rect x="168" y="369.3" width="12" height="1.6" fill="#b4b4ae" opacity="0.17"/><rect x="478" y="369.2" width="11" height="1.6" fill="#2e3232" opacity="0.44"/><rect x="196" y="369.4" width="7" height="1.6" fill="#2e3232" opacity="0.31"/><rect x="151" y="368.7" width="16" height="1.6" fill="#b4b4ae" opacity="0.35"/><rect x="204" y="369.9" width="20" height="1.6" fill="#b4b4ae" opacity="0.20"/><rect x="393" y="368.1" width="15" height="1.6" fill="#b4b4ae" opacity="0.23"/><rect x="419" y="369.8" width="15" height="1.6" fill="#2e3232" opacity="0.35"/><rect x="419" y="368.9" width="7" height="1.6" fill="#b4b4ae" opacity="0.27"/><rect x="467" y="368.9" width="16" height="1.6" fill="#2e3232" opacity="0.47"/><rect x="265" y="369.5" width="18" height="1.6" fill="#b4b4ae" opacity="0.32"/><rect x="213" y="369.5" width="7" height="1.6" fill="#b4b4ae" opacity="0.29"/><rect x="427" y="369.6" width="9" height="1.6" fill="#2e3232" opacity="0.22"/><rect x="39" y="371.1" width="8" height="1.6" fill="#b4b4ae" opacity="0.29"/><rect x="375" y="372.4" width="23" height="1.6" fill="#2e3232" opacity="0.22"/><rect x="222" y="372.7" width="20" height="1.6" fill="#b4b4ae" opacity="0.35"/><rect x="64" y="373.0" width="14" height="1.6" fill="#2e3232" opacity="0.20"/><rect x="139" y="372.7" width="12" height="1.6" fill="#2e3232" opacity="0.28"/><rect x="302" y="371.6" width="18" height="1.6" fill="#2e3232" opacity="0.22"/><rect x="483" y="371.4" width="25" height="1.6" fill="#b4b4ae" opacity="0.21"/><rect x="10" y="372.0" width="19" height="1.6" fill="#2e3232" opacity="0.34"/><rect x="319" y="372.8" width="15" height="1.6" fill="#b4b4ae" opacity="0.20"/><rect x="303" y="371.8" width="7" height="1.6" fill="#2e3232" opacity="0.36"/><rect x="308" y="371.6" width="14" height="1.6" fill="#2e3232" opacity="0.44"/><rect x="392" y="372.9" width="25" height="1.6" fill="#b4b4ae" opacity="0.26"/><rect x="238" y="372.3" width="27" height="1.6" fill="#2e3232" opacity="0.33"/><rect x="8" y="371.4" width="27" height="1.6" fill="#2e3232" opacity="0.38"/></svg>

</body></html>
